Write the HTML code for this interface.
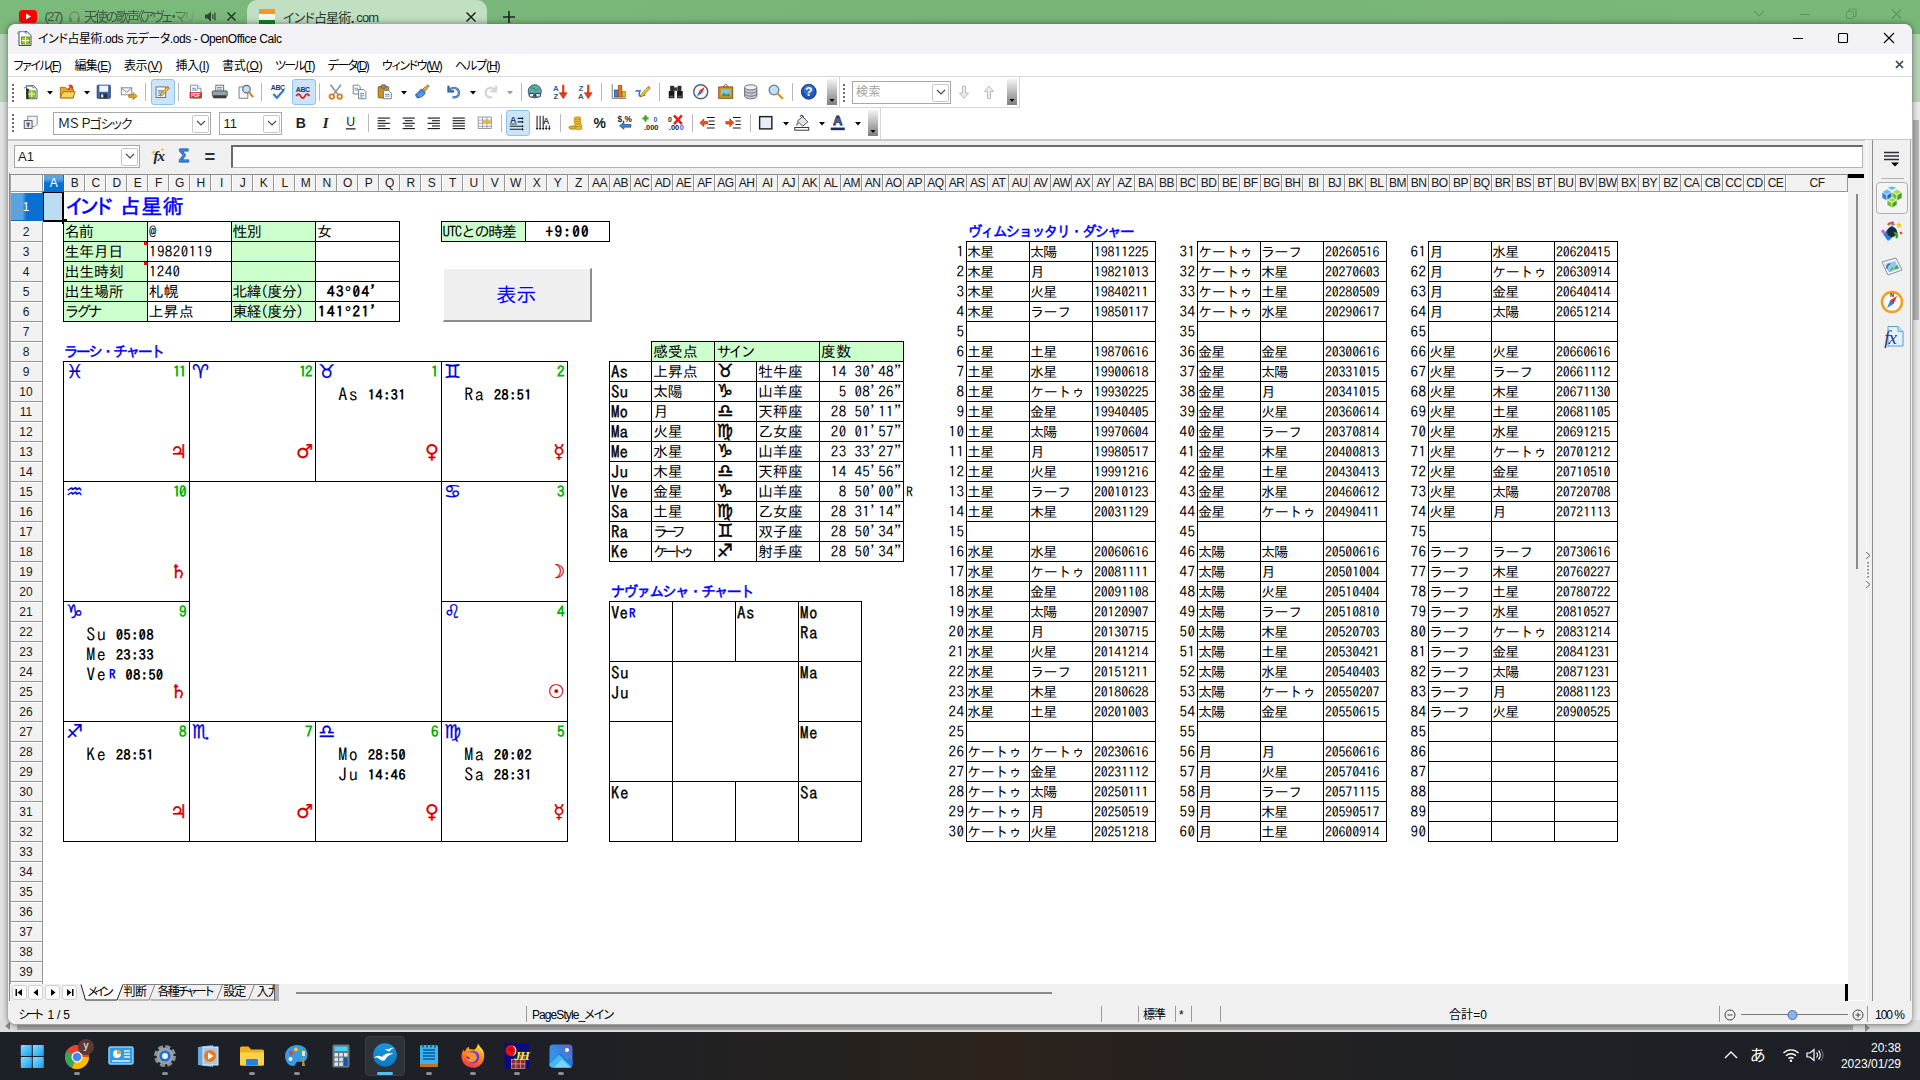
<!DOCTYPE html><html lang="ja"><head><meta charset="utf-8"><title>インド占星術.ods - OpenOffice Calc</title><style>
*{box-sizing:border-box;margin:0;padding:0}
html,body{width:1920px;height:1080px;overflow:hidden;background:#e6e6e6}
body{position:relative;font-family:"Liberation Sans","Noto Sans CJK JP",sans-serif;font-size:12px;color:#000}
.a{position:absolute}
.ui,.menu{font-family:"Liberation Sans","Noto Sans CJK JP",sans-serif;font-feature-settings:"palt"}
.g{font-family:"IPAGothic","Liberation Sans",monospace}
.sym{font-family:"DejaVu Sans","Liberation Sans",sans-serif}
#chrome{left:0;top:0;width:1920px;height:34px;background:linear-gradient(90deg,#7cba7c 0%,#78b478 55%,#7ab87a 100%)}
#chrome2{left:0;top:34px;width:1920px;height:68px;background:#b9d4b9}
#chromepage{left:0;top:102px;width:1920px;height:930px;background:#e4e4e4}
#win{left:8px;top:24px;width:1904px;height:1000px;background:#fff;border-radius:8px 8px 8px 8px;box-shadow:0 0 7px 1px rgba(0,0,0,.28),0 1px 4px rgba(0,0,0,.25);overflow:hidden}
#title{left:0;top:0;width:1904px;height:30px;background:#f2f2f7}
#menubar{left:0;top:30px;width:1904px;height:22px;background:#fff}
#tb{left:0;top:52px;width:1904px;height:64px;background:#fff;border-top:1px solid #d9d9d9}
#fbar{left:0;top:115px;width:1904px;height:35px;background:#f0f0f0;border-top:2px solid #c8c8c8}
#task{left:0;top:1032px;width:1920px;height:48px;background:linear-gradient(90deg,#1c2027 0%,#1e2026 30%,#24211f 42%,#2c231c 52%,#25211f 62%,#1f2125 75%,#1c1f26 100%)}
.menu span{position:absolute;top:4px;font-size:12px;line-height:17px;white-space:nowrap;color:#000}
.menu u{text-decoration:underline;text-underline-offset:1px}
.ch{position:absolute;top:0;height:18px;border-right:1px solid #969696;border-bottom:1px solid #969696;background:#f2f2f2;box-shadow:inset 1px 0 0 #fff;padding-left:1px;text-align:center;font-size:12px;line-height:19px;color:#1a1a1a;letter-spacing:-0.5px;white-space:nowrap;overflow:hidden}
.rh{position:absolute;left:0;width:33px;border-right:1px solid #969696;border-bottom:1px solid #969696;background:#f2f2f2;box-shadow:inset 0 1px 0 #fff;text-align:center;font-size:12px;color:#1a1a1a;white-space:nowrap}
.c{position:absolute;font-size:15px;line-height:19px;white-space:nowrap;overflow:hidden;font-family:"IPAGothic","Liberation Sans",monospace;padding-left:1px}
.b{position:absolute;border:1px solid #000}
.hl{position:absolute;height:1px;background:#000}
.vl{position:absolute;width:1px;background:#000}
.gr{background:#ccffcc}
.bl{color:#0000ff}
</style></head><body>
<div id="chrome" class="a" style=""></div>
<div id="chrome2" class="a" style=""></div>
<div id="chromepage" class="a" style=""></div>
<div class="a" style="left:1905px;top:102px;width:15px;height:930px;background:#ececec"></div>
<div class="a" style="left:1913px;top:120px;width:6px;height:200px;background:#b4b4b4"></div>
<div class="a" style="left:0;top:1020px;width:1920px;height:12px;background:#dedede"></div>
<div class="a" style="left:17px;top:1025px;width:1836px;height:5px;background:#a4a4a4"></div>
<svg class="a" style="left:5px;top:1022px" width="6" height="8" viewBox="0 0 6 8"><path d="M5 0v8L0 4z" fill="#8a8a8a"/></svg>
<svg class="a" style="left:1864px;top:1024px" width="6" height="8" viewBox="0 0 6 8"><path d="M1 0v8l5-4z" fill="#8a8a8a"/></svg>
<div class="a" style="left:247px;top:0;width:240px;height:34px;background:#c1dfc1;border-radius:10px 10px 0 0"></div>
<svg class="a" style="left:19px;top:10px" width="18" height="13" viewBox="0 0 18 13"><rect x="0" y="0" width="18" height="13" rx="3.5" fill="#f00"/><path d="M7 3.5v6l5-3z" fill="#fff"/></svg>
<div class="a ui" style="left:44.4px;top:7px;font-size:13px;line-height:19px;color:#3c5a40;white-space:nowrap;letter-spacing:-1.38px">(27)</div>
<svg class="a" style="left:68px;top:10px" width="13" height="13" viewBox="0 0 13 13"><path d="M2 8.500V6.500a4.500 4.500 0 0 1 9 0v2" fill="none" stroke="#6a8a6c" stroke-width="1.300"/><rect x="1" y="7.500" width="2.800" height="4.500" rx="1" fill="#6a8a6c"/><rect x="9.200" y="7.500" width="2.800" height="4.500" rx="1" fill="#6a8a6c"/></svg>
<div class="a ui" style="left:84px;top:7px;font-size:13px;line-height:19px;color:#3c5a40;white-space:nowrap;letter-spacing:-2.13px;width:113px;overflow:hidden;-webkit-mask-image:linear-gradient(90deg,#000 78%,transparent 100%);mask-image:linear-gradient(90deg,#000 78%,transparent 100%)">天使の歌声《アヴェ・マリア》</div>
<svg class="a" style="left:205px;top:11px" width="12" height="11" viewBox="0 0 12 11"><path d="M0 3.5h2.5L6 .5v10L2.500 7.500H0z" fill="#2d4a30"/><path d="M8 3v5M10 1.500v8" stroke="#2d4a30" stroke-width="1.200" fill="none"/></svg>
<svg class="a" style="left:227px;top:12px" width="9" height="9" viewBox="0 0 9 9"><path d="M.5.500l8 8M8.500.500l-8 8" stroke="#1f3a22" stroke-width="1.500"/></svg>
<div class="a" style="left:259px;top:9px;width:16px;height:5px;background:#f7962c"></div>
<div class="a" style="left:259px;top:14px;width:16px;height:6px;background:#f4f4f0"></div>
<div class="a" style="left:259px;top:20px;width:16px;height:4px;background:#12861f"></div>
<div class="a ui" style="left:283px;top:7px;font-size:13px;color:#2a3b2c;white-space:nowrap;letter-spacing:-0.8px">インド占星術．com</div>
<svg class="a" style="left:466px;top:12px" width="10" height="10" viewBox="0 0 10 10"><path d="M.5.500l9 9M9.500.500l-9 9" stroke="#1c2a1e" stroke-width="1.500"/></svg>
<svg class="a" style="left:503px;top:11px" width="12" height="12" viewBox="0 0 12 12"><path d="M6 0v12M0 6h12" stroke="#1c2a1e" stroke-width="1.600"/></svg>
<svg class="a" style="left:1750px;top:6px" width="160" height="16" viewBox="0 0 160 16"><g stroke="#5a9a5c" stroke-width="1.100" fill="none"><path d="M4 5l5 5 5-5"/><path d="M50 8.500h10"/><rect x="96.500" y="5.500" width="7" height="7" rx="1.500"/><path d="M98.500 5.500v-1.500a1 1 0 0 1 1-1h5.500a1 1 0 0 1 1 1v5.500a1 1 0 0 1-1 1h-1.500"/><path d="M142 3.500l9 9M151 3.500l-9 9"/></g></svg>
<div id="win" class="a" style=""><div id="title" class="a" style=""></div><svg class="a" style="left:9px;top:5px" width="16" height="17" viewBox="0 0 16 17"><path d="M2 2.500h8l4 4v10H2z" fill="#fdfdfd" stroke="#3b4a5c" stroke-width="1"/><path d="M0 4.500c4-3 7-3 10 0" stroke="#8899aa" stroke-width="1.300" fill="none"/><rect x="4.500" y="8" width="8" height="7" fill="#9ccb2a" stroke="#56751a" stroke-width=".8"/><path d="M4.500 11.500h8M8.500 8v7" stroke="#fff" stroke-width=".9"/></svg><div class="a ui" style="left:30px;top:7px;font-size:12px;line-height:17px;letter-spacing:-0.43px;white-space:nowrap;color:#000">インド占星術.ods 元データ.ods - OpenOffice Calc</div><svg class="a" style="left:1780px;top:7px" width="120" height="14" viewBox="0 0 120 14"><g stroke="#000" stroke-width="1.100" fill="none"><path d="M5 7.500h10"/><rect x="50.500" y="2.500" width="9" height="9" rx="1"/><path d="M96 2l10 10M106 2l-10 10"/></g></svg><div id="menubar" class="a menu" style=""></div><div class="a menu" style="left:0;top:30px;width:1904px;height:22px"><span style="left:5.5px;letter-spacing:-1.43px">ファイル(<u>F</u>)</span><span style="left:66.5px;letter-spacing:-0.73px">編集(<u>E</u>)</span><span style="left:116px;letter-spacing:-0.38px">表示(<u>V</u>)</span><span style="left:167.5px;letter-spacing:-0.36px">挿入(<u>I</u>)</span><span style="left:214px;letter-spacing:-0.16px">書式(<u>O</u>)</span><span style="left:267px;letter-spacing:-1.79px">ツール(<u>T</u>)</span><span style="left:319.7px;letter-spacing:-1.64px">データ(<u>D</u>)</span><span style="left:374px;letter-spacing:-1.37px">ウィンドウ(<u>W</u>)</span><span style="left:447px;letter-spacing:-1.12px">ヘルプ(<u>H</u>)</span></div><svg class="a" style="left:1887px;top:36px" width="9" height="9" viewBox="0 0 9 9"><path d="M1 1l7 7M8 1l-7 7" stroke="#3c4654" stroke-width="1.700"/></svg><div id="tb" class="a" style=""></div><div id="fbar" class="a" style=""></div><svg class="a" style="left:4px;top:60px;" width="2" height="24" viewBox="0 0 2 24"><rect x="0" y="0" width="2" height="2" fill="#6a6a6a"/><rect x="0" y="4" width="2" height="2" fill="#6a6a6a"/><rect x="0" y="8" width="2" height="2" fill="#6a6a6a"/><rect x="0" y="12" width="2" height="2" fill="#6a6a6a"/><rect x="0" y="16" width="2" height="2" fill="#6a6a6a"/></svg><svg class="a" style="left:4px;top:90px;" width="2" height="24" viewBox="0 0 2 24"><rect x="0" y="0" width="2" height="2" fill="#6a6a6a"/><rect x="0" y="4" width="2" height="2" fill="#6a6a6a"/><rect x="0" y="8" width="2" height="2" fill="#6a6a6a"/><rect x="0" y="12" width="2" height="2" fill="#6a6a6a"/><rect x="0" y="16" width="2" height="2" fill="#6a6a6a"/></svg><div class="a" style="left:0px;top:83px;width:1012px;height:1px;background:#d6d6d6"></div><div class="a" style="left:831px;top:53px;width:1px;height:30px;background:#d6d6d6"></div><div class="a" style="left:1011px;top:53px;width:1px;height:31px;background:#d6d6d6"></div><div class="a" style="left:872px;top:84px;width:1px;height:31px;background:#d6d6d6"></div><div class="a" style="left:142.5px;top:55.0px;width:24px;height:26px;background:#cce4f7;border:1px solid #8cc4f0;border-radius:3px"></div><div class="a" style="left:283.5px;top:55.0px;width:24px;height:26px;background:#cce4f7;border:1px solid #8cc4f0;border-radius:3px"></div><div class="a" style="left:498.0px;top:86.0px;width:24px;height:26px;background:#cce4f7;border:1px solid #8cc4f0;border-radius:3px"></div><svg class="a" style="left:15.100000000000001px;top:59.2px;" width="17.5" height="17.5" viewBox="0 0 20 20"><path d="M4 3h8l4 4v11H4z" fill="#fdfdfd" stroke="#39485a" stroke-width="1"/><path d="M4 6v12h3V7z" fill="#1a222c"/><path d="M1 6c4-3.500 8-3.500 12 0" stroke="#8a98a8" stroke-width="1.400" fill="none"/><rect x="6" y="9" width="8" height="7.500" fill="#9ccb2a" stroke="#5a7a1a" stroke-width=".8"/><path d="M6 12.700h8M10 9v7.500" stroke="#fff" stroke-width=".9"/></svg><svg class="a" style="left:51.0px;top:59.2px;" width="17.5" height="17.5" viewBox="0 0 20 20"><path d="M1.500 5h6l1.500 2h7.500v10H1.500z" fill="#e8a825" stroke="#9a6a10" stroke-width="1"/><path d="M1.500 17l3-7h14l-2.500 7z" fill="#fbd25a" stroke="#9a6a10" stroke-width="1"/><path d="M10 8l5-5M15 3h-4M15 3v4" stroke="#d8401a" stroke-width="1.800" fill="none"/></svg><svg class="a" style="left:87.0px;top:59.2px;" width="17.5" height="17.5" viewBox="0 0 20 20"><rect x="2.500" y="2.500" width="15" height="15" rx="1" fill="#3f6ca8" stroke="#1f3a66" stroke-width="1"/><rect x="5" y="3" width="10" height="7" fill="#eef3fa"/><rect x="6" y="12" width="8" height="5.500" fill="#2a2f3a"/><rect x="7" y="13" width="2.500" height="3.500" fill="#dfe6f0"/></svg><svg class="a" style="left:112.1px;top:59.2px;" width="17.5" height="17.5" viewBox="0 0 20 20"><rect x="1.500" y="5.500" width="12" height="8" fill="#f4f4f4" stroke="#7a8088" stroke-width="1"/><path d="M1.500 5.500l6 5 6-5" fill="none" stroke="#7a8088" stroke-width="1"/><path d="M10 13.500h5v-2.500l4.500 4-4.500 4v-2.500h-5z" fill="#f0a020" stroke="#a86a08" stroke-width=".8"/></svg><svg class="a" style="left:145.1px;top:59.2px;" width="17.5" height="17.5" viewBox="0 0 20 20"><rect x="3.500" y="4.500" width="11" height="12" fill="#fff" stroke="#5a6674" stroke-width="1"/><path d="M5.500 9h6M5.500 11.500h6M5.500 14h4" stroke="#3b78c4" stroke-width="1.200"/><path d="M9 12l7.500-8 2 2-7.500 8-3 1z" fill="#f2c03a" stroke="#8a6a18" stroke-width=".8"/><path d="M16 4.500l2 2 .8-1.200-1.600-1.600z" fill="#e05a6a"/></svg><svg class="a" style="left:179.1px;top:59.2px;" width="17.5" height="17.5" viewBox="0 0 20 20"><path d="M4 2.500h8l4 4v11H4z" fill="#fff" stroke="#7a8088" stroke-width="1"/><path d="M12 2.500v4h4" fill="#e8ecf2" stroke="#7a8088" stroke-width=".8"/><path d="M6 6h4M6 8h6" stroke="#3b78c4" stroke-width="1"/><rect x="3" y="10.500" width="14" height="6.500" fill="#d81f26"/><text x="10" y="15.800" font-family="Liberation Sans,sans-serif" font-size="5.500" font-weight="bold" fill="#fff" text-anchor="middle">PDF</text></svg><svg class="a" style="left:203.1px;top:59.2px;" width="17.5" height="17.5" viewBox="0 0 20 20"><rect x="5.500" y="2.500" width="9" height="7" fill="#fff" stroke="#5a6068" stroke-width="1"/><path d="M7 5h6M7 7h6" stroke="#3b78c4" stroke-width="1"/><rect x="1.500" y="9" width="17" height="6.500" rx="1.200" fill="#9aa0a8" stroke="#42474e" stroke-width="1"/><rect x="2.500" y="14" width="15" height="3.500" fill="#3a3e44"/><circle cx="15.500" cy="11.500" r="1" fill="#5cd03a"/></svg><svg class="a" style="left:228.1px;top:59.2px;" width="17.5" height="17.5" viewBox="0 0 20 20"><path d="M3.500 4.500h7l3 3v10h-10z" fill="#f6f7f9" stroke="#6a727c" stroke-width="1"/><circle cx="12" cy="7" r="4.300" fill="#bfe0f6" stroke="#5a6672" stroke-width="1.300"/><path d="M15 10.500l4 5" stroke="#c08a28" stroke-width="2.400" stroke-linecap="round"/></svg><svg class="a" style="left:261.1px;top:59.2px;" width="17.5" height="17.5" viewBox="0 0 20 20"><text x="10" y="8.500" font-family="Liberation Sans,sans-serif" font-size="8" font-weight="bold" fill="#1d3a6a" text-anchor="middle" letter-spacing="-.4">ABC</text><path d="M5 12.500l4 4.500 8-9" stroke="#2f7fd6" stroke-width="2.600" fill="none"/></svg><svg class="a" style="left:286.1px;top:59.2px;" width="17.5" height="17.5" viewBox="0 0 20 20"><text x="10" y="10" font-family="Liberation Sans,sans-serif" font-size="8" font-weight="bold" fill="#1d3a6a" text-anchor="middle" letter-spacing="-.4">ABC</text><path d="M2.500 15c2-3 3.500-3 5 0s3.500 3 5 0 3.500-3 5 0" stroke="#e01818" stroke-width="2" fill="none"/></svg><svg class="a" style="left:319.1px;top:59.2px;" width="17.5" height="17.5" viewBox="0 0 20 20"><path d="M4 2l8.500 11M16 2L7.500 13" stroke="#8a9098" stroke-width="1.800"/><circle cx="5.500" cy="15.500" r="2.600" fill="none" stroke="#e07818" stroke-width="2"/><circle cx="14.500" cy="15.500" r="2.600" fill="none" stroke="#e07818" stroke-width="2"/></svg><svg class="a" style="left:343.1px;top:59.2px;" width="17.5" height="17.5" viewBox="0 0 20 20"><path d="M2.500 2.500h6l2 2v8h-8z" fill="#fff" stroke="#6a727c" stroke-width="1"/><path d="M4 6h4M4 8h5" stroke="#3b78c4" stroke-width=".9"/><path d="M8.500 7.500h6l2.500 2.500v8h-8.500z" fill="#fff" stroke="#6a727c" stroke-width="1"/><path d="M10 12h5M10 14h5M10 16h4" stroke="#3b78c4" stroke-width=".9"/></svg><svg class="a" style="left:368.1px;top:59.2px;" width="17.5" height="17.5" viewBox="0 0 20 20"><rect x="2.500" y="4" width="12" height="13" rx="1" fill="#c8932a" stroke="#7a5a14" stroke-width="1"/><rect x="6" y="2" width="5" height="4" rx="1" fill="#8a9098" stroke="#4a5058" stroke-width=".8"/><path d="M8.500 8.500h6l3 3v6.500h-9z" fill="#fff" stroke="#6a727c" stroke-width="1"/><path d="M10 13h5.500M10 15h5.500" stroke="#3b78c4" stroke-width=".9"/></svg><svg class="a" style="left:405.1px;top:59.2px;" width="17.5" height="17.5" viewBox="0 0 20 20"><path d="M11 7l6-5 1.500 1.500-5 6z" fill="#e8b030" stroke="#7a5a14" stroke-width=".8"/><path d="M3 13c2 0 4-5 7-6l4 4c-1 3-5 6-9 6-1-1-2-2-2-4z" fill="#3f86d8" stroke="#1f4a86" stroke-width=".9"/><path d="M6 15l4-4M8 16l4-4" stroke="#9cc6f2" stroke-width=".9"/></svg><svg class="a" style="left:437.1px;top:59.2px;" width="17.5" height="17.5" viewBox="0 0 20 20"><path d="M4 3v6.500h6.500" fill="none" stroke="#2f5f9e" stroke-width="2.600"/><path d="M4.500 9c2.500-4 8-4.500 10.500-1s.5 8-4.500 8.500h-2" fill="none" stroke="#2f5f9e" stroke-width="2.600"/><path d="M4.500 9c2.500-4 8-4.500 10.500-1s.5 8-4.500 8.500h-2" fill="none" stroke="#8ab4e6" stroke-width="1"/></svg><svg class="a" style="left:474.1px;top:59.2px;" width="17.5" height="17.5" viewBox="0 0 20 20"><g opacity=".55"><path d="M16 3v6.500H9.500" fill="none" stroke="#b0b4ba" stroke-width="2.600"/><path d="M15.500 9c-2.500-4-8-4.500-10.500-1s-.5 8 4.500 8.500h2" fill="none" stroke="#b0b4ba" stroke-width="2.600"/></g></svg><svg class="a" style="left:518.0px;top:59.2px;" width="17.5" height="17.5" viewBox="0 0 20 20"><circle cx="10" cy="9.500" r="7.500" fill="#58a6d8" stroke="#3a4a5a" stroke-width="1"/><path d="M5 5c2 2 4 0 5 2s3 1 4-1M4 12c2-1 3 1 5 0s4 1 6 0" fill="#6cc04a" stroke="#4a9a30" stroke-width="1.500"/><rect x="3.500" y="12" width="6" height="4" rx="2" fill="#e8eaee" stroke="#3a3f46" stroke-width="1.200"/><rect x="10.500" y="12" width="6" height="4" rx="2" fill="#e8eaee" stroke="#3a3f46" stroke-width="1.200"/><path d="M8 14h4" stroke="#3a3f46" stroke-width="1.300"/></svg><svg class="a" style="left:543.0px;top:59.2px;" width="17.5" height="17.5" viewBox="0 0 20 20"><text x="5.500" y="9" font-family="Liberation Sans,sans-serif" font-size="9" font-weight="bold" fill="#1d63c4" text-anchor="middle">A</text><text x="5.500" y="18" font-family="Liberation Sans,sans-serif" font-size="9" font-weight="bold" fill="#4a5058" text-anchor="middle">Z</text><path d="M14 2v11" stroke="#e0401a" stroke-width="2.600"/><path d="M9.500 11h9l-4.500 7z" fill="#e0401a" stroke="#a82808" stroke-width=".6"/></svg><svg class="a" style="left:568.0px;top:59.2px;" width="17.5" height="17.5" viewBox="0 0 20 20"><text x="5.500" y="9" font-family="Liberation Sans,sans-serif" font-size="9" font-weight="bold" fill="#1d63c4" text-anchor="middle">Z</text><text x="5.500" y="18" font-family="Liberation Sans,sans-serif" font-size="9" font-weight="bold" fill="#4a5058" text-anchor="middle">A</text><path d="M14 2v11" stroke="#e0401a" stroke-width="2.600"/><path d="M9.500 11h9l-4.500 7z" fill="#e0401a" stroke="#a82808" stroke-width=".6"/></svg><svg class="a" style="left:602.0px;top:59.2px;" width="17.5" height="17.5" viewBox="0 0 20 20"><path d="M2.500 1.500v16h16" fill="none" stroke="#5a6068" stroke-width="1"/><rect x="5" y="8" width="4" height="8" fill="#3f86d8" stroke="#1f4a86" stroke-width=".8"/><rect x="9.500" y="3" width="4" height="13" fill="#e8701a" stroke="#9a4208" stroke-width=".8"/><rect x="14" y="9.500" width="3.500" height="6.500" fill="#f2b81a" stroke="#9a7208" stroke-width=".8"/></svg><svg class="a" style="left:626.0px;top:59.2px;" width="17.5" height="17.5" viewBox="0 0 20 20"><path d="M2 10c2-4 4 2 5-1s-3 6 0 6 4-2 6-1" fill="none" stroke="#2f6fd0" stroke-width="1.600"/><path d="M8 13l8.500-9 2 2-8.500 9-3 1z" fill="#f2c03a" stroke="#8a6a18" stroke-width=".8"/><path d="M16 4.500l2 2 .8-1.200-1.600-1.600z" fill="#e05a6a"/></svg><svg class="a" style="left:659.0px;top:59.2px;" width="17.5" height="17.5" viewBox="0 0 20 20"><rect x="3.500" y="3" width="4.500" height="6" rx="1" fill="#2a2d32"/><rect x="12" y="3" width="4.500" height="6" rx="1" fill="#2a2d32"/><rect x="8" y="5" width="4" height="4" fill="#3a3e44"/><path d="M2 9h6.500v8.500H2zM11.500 9H18v8.500h-6.500z" fill="#16181c"/><rect x="3" y="14.500" width="4.500" height="2" fill="#5a6068"/><rect x="12.500" y="14.500" width="4.500" height="2" fill="#5a6068"/></svg><svg class="a" style="left:684.0px;top:59.2px;" width="17.5" height="17.5" viewBox="0 0 20 20"><circle cx="10" cy="10" r="8" fill="#f4f6f8" stroke="#5a6068" stroke-width="1.600"/><path d="M14.500 4.500l-3 7-3-3z" fill="#e0301a"/><path d="M5.500 15.500l3-7 3 3z" fill="#2f6fd0"/></svg><svg class="a" style="left:709.0px;top:59.2px;" width="17.5" height="17.5" viewBox="0 0 20 20"><path d="M10 1l-3 3.500h6z" fill="none" stroke="#6a5a2a" stroke-width="1"/><rect x="2" y="4.500" width="16" height="13" fill="#d8901a" stroke="#7a4a08" stroke-width="1"/><rect x="4.500" y="7" width="11" height="8" fill="#7cc4f0"/><path d="M4.500 15l3.500-4 3 2.500 2-2 2.500 3.500z" fill="#4a9a2a"/></svg><svg class="a" style="left:734.0px;top:59.2px;" width="17.5" height="17.5" viewBox="0 0 20 20"><path d="M3 5v10c0 1.700 3 3 7 3s7-1.300 7-3V5" fill="#c8ccd2" stroke="#5a6068" stroke-width="1"/><ellipse cx="10" cy="5" rx="7" ry="3" fill="#eceef2" stroke="#5a6068" stroke-width="1"/><path d="M3 8.500c0 1.700 3 3 7 3s7-1.300 7-3M3 12c0 1.700 3 3 7 3s7-1.300 7-3" fill="none" stroke="#5a6068" stroke-width="1"/></svg><svg class="a" style="left:759.0px;top:59.2px;" width="17.5" height="17.5" viewBox="0 0 20 20"><circle cx="8" cy="8" r="5.500" fill="#bfe0f6" stroke="#6a7a8a" stroke-width="1.500"/><path d="M12 12l5.500 5.500" stroke="#d8981a" stroke-width="2.600" stroke-linecap="round"/></svg><svg class="a" style="left:792.0px;top:59.2px;" width="17.5" height="17.5" viewBox="0 0 20 20"><circle cx="10" cy="10" r="8.500" fill="#1d55b4" stroke="#0f3478" stroke-width="1"/><circle cx="10" cy="8" r="6" fill="#3f7fe0" opacity=".6"/><text x="10" y="15" font-family="Liberation Sans,sans-serif" font-size="14" font-weight="bold" fill="#fff" text-anchor="middle">?</text></svg><svg class="a" style="left:38.5px;top:66.5px;" width="6" height="4" viewBox="0 0 6 4"><path d="M0 0h6l-3 3.500z" fill="#000"/></svg><svg class="a" style="left:75.5px;top:66.5px;" width="6" height="4" viewBox="0 0 6 4"><path d="M0 0h6l-3 3.500z" fill="#000"/></svg><svg class="a" style="left:392.5px;top:66.5px;" width="6" height="4" viewBox="0 0 6 4"><path d="M0 0h6l-3 3.500z" fill="#000"/></svg><svg class="a" style="left:461.5px;top:66.5px;" width="6" height="4" viewBox="0 0 6 4"><path d="M0 0h6l-3 3.500z" fill="#000"/></svg><svg class="a" style="left:498.5px;top:66.5px;" width="6" height="4" viewBox="0 0 6 4"><path d="M0 0h6l-3 3.500z" fill="#9a9a9a"/></svg><div class="a" style="left:137px;top:59px;width:1px;height:18px;background:#b8b8b8"></div><div class="a" style="left:170px;top:59px;width:1px;height:18px;background:#b8b8b8"></div><div class="a" style="left:253px;top:59px;width:1px;height:18px;background:#b8b8b8"></div><div class="a" style="left:311px;top:59px;width:1px;height:18px;background:#b8b8b8"></div><div class="a" style="left:513px;top:59px;width:1px;height:18px;background:#b8b8b8"></div><div class="a" style="left:593px;top:59px;width:1px;height:18px;background:#b8b8b8"></div><div class="a" style="left:651px;top:59px;width:1px;height:18px;background:#b8b8b8"></div><div class="a" style="left:784px;top:59px;width:1px;height:18px;background:#b8b8b8"></div><svg class="a" style="left:819px;top:55px;" width="10" height="26" viewBox="0 0 10 26"><defs><linearGradient id="eg827" x1="0" y1="0" x2="0" y2="1"><stop offset="0" stop-color="#f4f4f4"/><stop offset="1" stop-color="#7e7e7e"/></linearGradient></defs><rect width="10" height="26" fill="url(#eg827)"/><path d="M2.500 20h5l-2.500 3z" fill="#000"/></svg><svg class="a" style="left:835px;top:60px;" width="2" height="24" viewBox="0 0 2 24"><rect x="0" y="0" width="2" height="2" fill="#6a6a6a"/><rect x="0" y="4" width="2" height="2" fill="#6a6a6a"/><rect x="0" y="8" width="2" height="2" fill="#6a6a6a"/><rect x="0" y="12" width="2" height="2" fill="#6a6a6a"/><rect x="0" y="16" width="2" height="2" fill="#6a6a6a"/></svg><div class="a" style="left:844px;top:57px;width:99px;height:23px;background:#fff;border:1px solid #a8a8a8"></div><div class="a" style="left:924px;top:60px;width:17px;height:18px;background:#fff;border:1px solid #c8c8c8;border-radius:2px"></div><svg class="a" style="left:927.5px;top:65px;" width="10" height="6" viewBox="0 0 10 6"><path d="M1 1l4 4 4-4" fill="none" stroke="#4a4a4a" stroke-width="1.100"/></svg><div class="a ui" style="left:848px;top:60px;font-size:12px;line-height:17px;color:#a4a4a4;white-space:nowrap;letter-spacing:0.5px">検索</div><svg class="a" style="left:949px;top:61px;" width="40" height="15" viewBox="0 0 40 15"><g fill="#ececec" stroke="#bcbcbc" stroke-width="1"><path d="M5.500 1v7h-3l4.500 5.500L11.500 8h-3V1z"/><path d="M30.500 13.500v-7h-3l4.500-5.500 4.500 5.500h-3v7z"/></g></svg><svg class="a" style="left:999px;top:55px;" width="10" height="26" viewBox="0 0 10 26"><defs><linearGradient id="eg1007" x1="0" y1="0" x2="0" y2="1"><stop offset="0" stop-color="#f4f4f4"/><stop offset="1" stop-color="#7e7e7e"/></linearGradient></defs><rect width="10" height="26" fill="url(#eg1007)"/><path d="M2.500 20h5l-2.500 3z" fill="#000"/></svg><svg class="a" style="left:14.2px;top:90.2px;" width="17.5" height="17.5" viewBox="0 0 20 20"><path d="M6.500 2.500h11v9l-3 3h-8z" fill="#f0f2f6" stroke="#7a828c" stroke-width="1"/><rect x="2.500" y="7.500" width="9" height="9" fill="#dfe3ea" stroke="#4a5058" stroke-width="1"/><path d="M5 10.500h4M7 10.500v4.500M5.500 12.500h3" stroke="#2a2d32" stroke-width="1"/></svg><div class="a" style="left:45px;top:88px;width:158px;height:23px;background:#fff;border:1px solid #a8a8a8"></div><div class="a" style="left:184px;top:91px;width:17px;height:18px;background:#fff;border:1px solid #c8c8c8;border-radius:2px"></div><svg class="a" style="left:187.5px;top:96px;" width="10" height="6" viewBox="0 0 10 6"><path d="M1 1l4 4 4-4" fill="none" stroke="#4a4a4a" stroke-width="1.100"/></svg><div class="a ui" style="left:49.5px;top:91px;font-size:13px;line-height:17px;color:#1a1a1a;white-space:nowrap;letter-spacing:-1.03px">ＭＳ Ｐゴシック</div><div class="a" style="left:211px;top:88px;width:63px;height:23px;background:#fff;border:1px solid #a8a8a8"></div><div class="a" style="left:255px;top:91px;width:17px;height:18px;background:#fff;border:1px solid #c8c8c8;border-radius:2px"></div><svg class="a" style="left:258.5px;top:96px;" width="10" height="6" viewBox="0 0 10 6"><path d="M1 1l4 4 4-4" fill="none" stroke="#4a4a4a" stroke-width="1.100"/></svg><div class="a ui" style="left:215.5px;top:91px;font-size:13px;line-height:17px;color:#1a1a1a;white-space:nowrap;letter-spacing:0">11</div><svg class="a" style="left:284.2px;top:90.2px;" width="17.5" height="17.5" viewBox="0 0 20 20"><text x="10" y="16" font-family="Liberation Sans,sans-serif" font-size="16" font-weight="bold" fill="#1a1d2a" text-anchor="middle">B</text></svg><svg class="a" style="left:309.2px;top:90.2px;" width="17.5" height="17.5" viewBox="0 0 20 20"><text x="10" y="16" font-family="Liberation Serif,serif" font-size="17" font-style="italic" font-weight="bold" fill="#1a1d2a" text-anchor="middle">I</text></svg><svg class="a" style="left:334.2px;top:90.2px;" width="17.5" height="17.5" viewBox="0 0 20 20"><text x="10" y="14" font-family="Liberation Sans,sans-serif" font-size="14" fill="#1a1d2a" text-anchor="middle">U</text><path d="M4.500 17h11" stroke="#1a1d2a" stroke-width="1.200"/></svg><svg class="a" style="left:367.2px;top:90.2px;" width="17.5" height="17.5" viewBox="0 0 20 20"><rect x="3" y="4" width="14" height="1.300" fill="#1a1d22"/><rect x="3" y="7" width="9" height="1.300" fill="#1a1d22"/><rect x="3" y="10" width="14" height="1.300" fill="#1a1d22"/><rect x="3" y="13" width="9" height="1.300" fill="#1a1d22"/><rect x="3" y="16" width="14" height="1.300" fill="#1a1d22"/></svg><svg class="a" style="left:392.2px;top:90.2px;" width="17.5" height="17.5" viewBox="0 0 20 20"><rect x="3" y="4" width="14" height="1.300" fill="#1a1d22"/><rect x="5.5" y="7" width="9" height="1.300" fill="#1a1d22"/><rect x="3" y="10" width="14" height="1.300" fill="#1a1d22"/><rect x="5.5" y="13" width="9" height="1.300" fill="#1a1d22"/><rect x="3" y="16" width="14" height="1.300" fill="#1a1d22"/></svg><svg class="a" style="left:417.2px;top:90.2px;" width="17.5" height="17.5" viewBox="0 0 20 20"><rect x="3" y="4" width="14" height="1.300" fill="#1a1d22"/><rect x="8" y="7" width="9" height="1.300" fill="#1a1d22"/><rect x="3" y="10" width="14" height="1.300" fill="#1a1d22"/><rect x="8" y="13" width="9" height="1.300" fill="#1a1d22"/><rect x="3" y="16" width="14" height="1.300" fill="#1a1d22"/></svg><svg class="a" style="left:442.2px;top:90.2px;" width="17.5" height="17.5" viewBox="0 0 20 20"><rect x="3" y="4" width="14" height="1.300" fill="#1a1d22"/><rect x="3" y="7" width="14" height="1.300" fill="#1a1d22"/><rect x="3" y="10" width="14" height="1.300" fill="#1a1d22"/><rect x="3" y="13" width="14" height="1.300" fill="#1a1d22"/><rect x="3" y="16" width="14" height="1.300" fill="#1a1d22"/></svg><svg class="a" style="left:468.2px;top:90.2px;" width="17.5" height="17.5" viewBox="0 0 20 20"><rect x="2.500" y="3.500" width="15" height="13" fill="#fff" stroke="#8a9098" stroke-width="1"/><path d="M2.500 7h15M2.500 10.500h15M2.500 14h15M7.500 3.500v13M12.500 3.500v13" stroke="#8a9098" stroke-width=".9"/><rect x="8" y="7.500" width="9" height="3" fill="#f2b81a"/></svg><svg class="a" style="left:500.2px;top:90.2px;" width="17.5" height="17.5" viewBox="0 0 20 20"><text x="6" y="10" font-family="Liberation Sans,sans-serif" font-size="10" font-weight="bold" fill="#1d3a6a" text-anchor="middle">A</text><path d="M2 11.500h8" stroke="#1d3a6a" stroke-width="1"/><path d="M11 5h6M11 9h6M2 14h15M2 17.500h15" stroke="#1a1d22" stroke-width="1.200"/><path d="M16 3.500l2 1.500-2 1.500zM16 7.500l2 1.500-2 1.500zM16 12.500l2 1.500-2 1.500zM16 16l2 1.500-2 1.500z" fill="#1a1d22"/></svg><svg class="a" style="left:526.2px;top:90.2px;" width="17.5" height="17.5" viewBox="0 0 20 20"><text x="14" y="11" font-family="Liberation Sans,sans-serif" font-size="10" font-weight="bold" fill="#1d3a6a" text-anchor="middle">A</text><path d="M3.500 2v15M7 2v15M10.500 2v15M14 13v4M17.500 13v4" stroke="#1a1d22" stroke-width="1.200"/><path d="M2 16h3l-1.500 2.500zM5.500 16h3L7 18.500zM9 16h3l-1.500 2.500zM12.500 16h3L14 18.500zM16 16h3l-1.500 2.500z" fill="#1a1d22"/></svg><svg class="a" style="left:559.2px;top:90.2px;" width="17.5" height="17.5" viewBox="0 0 20 20"><ellipse cx="12" cy="5" rx="4" ry="1.800" fill="#f2c03a" stroke="#a87a10" stroke-width=".8"/><ellipse cx="12" cy="7.500" rx="4" ry="1.800" fill="#f2c03a" stroke="#a87a10" stroke-width=".8"/><ellipse cx="12" cy="10" rx="4" ry="1.800" fill="#f2c03a" stroke="#a87a10" stroke-width=".8"/><ellipse cx="13" cy="13" rx="4" ry="1.800" fill="#f2c03a" stroke="#a87a10" stroke-width=".8"/><ellipse cx="7" cy="15.500" rx="5" ry="2" fill="#e8a820" stroke="#a87a10" stroke-width=".8"/><ellipse cx="13.500" cy="16" rx="4" ry="1.800" fill="#f2c03a" stroke="#a87a10" stroke-width=".8"/></svg><svg class="a" style="left:583.2px;top:90.2px;" width="17.5" height="17.5" viewBox="0 0 20 20"><text x="10" y="16" font-family="Liberation Sans,sans-serif" font-size="16" font-weight="bold" fill="#1a1d22" text-anchor="middle">%</text></svg><svg class="a" style="left:608.2px;top:90.2px;" width="17.5" height="17.5" viewBox="0 0 20 20"><text x="10" y="9" font-family="Liberation Sans,sans-serif" font-size="9.500" font-weight="bold" fill="#1a1d22" text-anchor="middle">$,%</text><path d="M17 14.500h-8v-2.500l-5 4 5 4v-2.500h8z" fill="#3f86d8" stroke="#1f4a86" stroke-width=".8" transform="translate(0,-2.500)"/></svg><svg class="a" style="left:634.2px;top:90.2px;" width="17.5" height="17.5" viewBox="0 0 20 20"><path d="M4 1.500v7M.5 5h7" stroke="#3aa81a" stroke-width="2.600"/><text x="13" y="9" font-family="Liberation Sans,sans-serif" font-size="8" font-weight="bold" fill="#2f5fd0">0</text><text x="10.500" y="18.500" font-family="Liberation Sans,sans-serif" font-size="8.500" font-weight="bold" fill="#1a1d22" text-anchor="middle">.000</text></svg><svg class="a" style="left:659.2px;top:90.2px;" width="17.5" height="17.5" viewBox="0 0 20 20"><text x="1" y="9" font-family="Liberation Sans,sans-serif" font-size="8" font-weight="bold" fill="#1a1d22">0</text><text x="8" y="18.500" font-family="Liberation Sans,sans-serif" font-size="8.500" font-weight="bold" fill="#1a1d22" text-anchor="middle">.00</text><text x="17" y="18.500" font-family="Liberation Sans,sans-serif" font-size="8.500" font-weight="bold" fill="#2f5fd0" text-anchor="middle">0</text><path d="M8 1.500l9 10M17 1.500l-9 10" stroke="#e02020" stroke-width="2.800"/></svg><svg class="a" style="left:691.2px;top:90.2px;" width="17.5" height="17.5" viewBox="0 0 20 20"><path d="M9 4h9M11 8h7M11 12h7M9 16h9" stroke="#1a1d22" stroke-width="1.300"/><path d="M10 8.500H5.500v-3L1 10l4.500 4.500v-3H10z" fill="#f0501a" stroke="#a83008" stroke-width=".7"/></svg><svg class="a" style="left:717.2px;top:90.2px;" width="17.5" height="17.5" viewBox="0 0 20 20"><path d="M9 4h9M12 8h6M12 12h6M9 16h9" stroke="#1a1d22" stroke-width="1.300"/><path d="M1 8.500h4.500v-3L10 10l-4.500 4.500v-3H1z" fill="#f0501a" stroke="#a83008" stroke-width=".7"/></svg><svg class="a" style="left:749.2px;top:90.2px;" width="17.5" height="17.5" viewBox="0 0 20 20"><rect x="3" y="3" width="14" height="14" fill="#e8ecf4" stroke="#1a1d22" stroke-width="1.600"/></svg><svg class="a" style="left:785.2px;top:90.2px;" width="17.5" height="17.5" viewBox="0 0 20 20"><path d="M5 8l6-5 6 6-6 5z" fill="#dfe3ea" stroke="#3a3f46" stroke-width="1"/><path d="M8 3c1-2 4-2 4 1" fill="none" stroke="#3a3f46" stroke-width="1.200"/><path d="M5 9c-1 1-2 3-1 5 1-1 2-2 3-3z" fill="#8a9098"/><rect x="2" y="15.500" width="16" height="3" fill="#fff" stroke="#1a1d22" stroke-width="1"/></svg><svg class="a" style="left:821.2px;top:90.2px;" width="17.5" height="17.5" viewBox="0 0 20 20"><text x="10" y="13" font-family="Liberation Sans,sans-serif" font-size="15" font-weight="bold" fill="#5a7ab0" stroke="#1d2f55" stroke-width=".9" text-anchor="middle">A</text><rect x="2" y="15.500" width="16" height="3" fill="#1d2f55"/></svg><svg class="a" style="left:774.5px;top:97.5px;" width="6" height="4" viewBox="0 0 6 4"><path d="M0 0h6l-3 3.500z" fill="#000"/></svg><svg class="a" style="left:810.5px;top:97.5px;" width="6" height="4" viewBox="0 0 6 4"><path d="M0 0h6l-3 3.500z" fill="#000"/></svg><svg class="a" style="left:846.5px;top:97.5px;" width="6" height="4" viewBox="0 0 6 4"><path d="M0 0h6l-3 3.500z" fill="#000"/></svg><div class="a" style="left:360px;top:90px;width:1px;height:18px;background:#b8b8b8"></div><div class="a" style="left:493px;top:90px;width:1px;height:18px;background:#b8b8b8"></div><div class="a" style="left:552px;top:90px;width:1px;height:18px;background:#b8b8b8"></div><div class="a" style="left:684px;top:90px;width:1px;height:18px;background:#b8b8b8"></div><div class="a" style="left:742px;top:90px;width:1px;height:18px;background:#b8b8b8"></div><svg class="a" style="left:860px;top:86px;" width="10" height="26" viewBox="0 0 10 26"><defs><linearGradient id="eg868" x1="0" y1="0" x2="0" y2="1"><stop offset="0" stop-color="#f4f4f4"/><stop offset="1" stop-color="#7e7e7e"/></linearGradient></defs><rect width="10" height="26" fill="url(#eg868)"/><path d="M2.500 20h5l-2.500 3z" fill="#000"/></svg><div class="a" style="left:6px;top:121px;width:126px;height:23px;background:#fff;border:1px solid #a8a8a8"></div><div class="a" style="left:113px;top:124px;width:17px;height:18px;background:#fff;border:1px solid #c8c8c8;border-radius:2px"></div><svg class="a" style="left:116.5px;top:129px;" width="10" height="6" viewBox="0 0 10 6"><path d="M1 1l4 4 4-4" fill="none" stroke="#4a4a4a" stroke-width="1.100"/></svg><div class="a ui" style="left:10px;top:124px;font-size:13px;line-height:17px;color:#1a1a1a;white-space:nowrap;letter-spacing:0">A1</div><svg class="a" style="left:142.2px;top:123.19999999999999px;" width="17.5" height="17.5" viewBox="0 0 20 20"><text x="10" y="16" font-family="Liberation Serif,serif" font-size="17" font-style="italic" font-weight="bold" fill="#1a2436" text-anchor="middle" letter-spacing="-1">fx</text><path d="M4 3l.8 1.800 1.800.8-1.800.8L4 9l-.8-1.800L1.400 6.400l1.800-.8zM14 1l.6 1.400 1.400.6-1.400.6L14 5l-.6-1.400L12 3l1.400-.6z" fill="#f2b81a"/></svg><svg class="a" style="left:167.2px;top:123.19999999999999px;" width="17.5" height="17.5" viewBox="0 0 20 20"><text x="10" y="17" font-family="Liberation Sans,sans-serif" font-size="20" font-weight="bold" fill="#3f9ae6" stroke="#1d55b4" stroke-width=".9" text-anchor="middle">Σ</text></svg><svg class="a" style="left:193.2px;top:123.19999999999999px;" width="17.5" height="17.5" viewBox="0 0 20 20"><text x="10" y="18" font-family="Liberation Sans,sans-serif" font-size="21" font-weight="bold" fill="#2a3442" text-anchor="middle">=</text></svg><div class="a" style="left:223px;top:121px;width:1632px;height:23px;background:#fff;border:1px solid #b4b4b4;border-top:2px solid #6a6a6a;border-left:2px solid #6a6a6a"></div><div class="a" style="left:2px;top:150px;width:1838px;height:811px;overflow:hidden;background:#fff"><div class="ch" style="left:0;width:33px"></div><div class="ch" style="left:33px;width:21px;background:linear-gradient(180deg,#58a4e2 0%,#58a4e2 30%,#0a6fd0 55%);color:#fff;border-right-color:#0a6fd0;border-bottom-color:#0a6fd0;">A</div><div class="ch" style="left:54px;width:21px;">B</div><div class="ch" style="left:75px;width:21px;">C</div><div class="ch" style="left:96px;width:21px;">D</div><div class="ch" style="left:117px;width:21px;">E</div><div class="ch" style="left:138px;width:21px;">F</div><div class="ch" style="left:159px;width:21px;">G</div><div class="ch" style="left:180px;width:21px;">H</div><div class="ch" style="left:201px;width:21px;">I</div><div class="ch" style="left:222px;width:21px;">J</div><div class="ch" style="left:243px;width:21px;">K</div><div class="ch" style="left:264px;width:21px;">L</div><div class="ch" style="left:285px;width:21px;">M</div><div class="ch" style="left:306px;width:21px;">N</div><div class="ch" style="left:327px;width:21px;">O</div><div class="ch" style="left:348px;width:21px;">P</div><div class="ch" style="left:369px;width:21px;">Q</div><div class="ch" style="left:390px;width:21px;">R</div><div class="ch" style="left:411px;width:21px;">S</div><div class="ch" style="left:432px;width:21px;">T</div><div class="ch" style="left:453px;width:21px;">U</div><div class="ch" style="left:474px;width:21px;">V</div><div class="ch" style="left:495px;width:21px;">W</div><div class="ch" style="left:516px;width:21px;">X</div><div class="ch" style="left:537px;width:21px;">Y</div><div class="ch" style="left:558px;width:21px;">Z</div><div class="ch" style="left:579px;width:21px;">AA</div><div class="ch" style="left:600px;width:21px;">AB</div><div class="ch" style="left:621px;width:21px;">AC</div><div class="ch" style="left:642px;width:21px;">AD</div><div class="ch" style="left:663px;width:21px;">AE</div><div class="ch" style="left:684px;width:21px;">AF</div><div class="ch" style="left:705px;width:21px;">AG</div><div class="ch" style="left:726px;width:21px;">AH</div><div class="ch" style="left:747px;width:21px;">AI</div><div class="ch" style="left:768px;width:21px;">AJ</div><div class="ch" style="left:789px;width:21px;">AK</div><div class="ch" style="left:810px;width:21px;">AL</div><div class="ch" style="left:831px;width:21px;">AM</div><div class="ch" style="left:852px;width:21px;">AN</div><div class="ch" style="left:873px;width:21px;">AO</div><div class="ch" style="left:894px;width:21px;">AP</div><div class="ch" style="left:915px;width:21px;">AQ</div><div class="ch" style="left:936px;width:21px;">AR</div><div class="ch" style="left:957px;width:21px;">AS</div><div class="ch" style="left:978px;width:21px;">AT</div><div class="ch" style="left:999px;width:21px;">AU</div><div class="ch" style="left:1020px;width:21px;">AV</div><div class="ch" style="left:1041px;width:21px;">AW</div><div class="ch" style="left:1062px;width:21px;">AX</div><div class="ch" style="left:1083px;width:21px;">AY</div><div class="ch" style="left:1104px;width:21px;">AZ</div><div class="ch" style="left:1125px;width:21px;">BA</div><div class="ch" style="left:1146px;width:21px;">BB</div><div class="ch" style="left:1167px;width:21px;">BC</div><div class="ch" style="left:1188px;width:21px;">BD</div><div class="ch" style="left:1209px;width:21px;">BE</div><div class="ch" style="left:1230px;width:21px;">BF</div><div class="ch" style="left:1251px;width:21px;">BG</div><div class="ch" style="left:1272px;width:21px;">BH</div><div class="ch" style="left:1293px;width:21px;">BI</div><div class="ch" style="left:1314px;width:21px;">BJ</div><div class="ch" style="left:1335px;width:21px;">BK</div><div class="ch" style="left:1356px;width:21px;">BL</div><div class="ch" style="left:1377px;width:21px;">BM</div><div class="ch" style="left:1398px;width:21px;">BN</div><div class="ch" style="left:1419px;width:21px;">BO</div><div class="ch" style="left:1440px;width:21px;">BP</div><div class="ch" style="left:1461px;width:21px;">BQ</div><div class="ch" style="left:1482px;width:21px;">BR</div><div class="ch" style="left:1503px;width:21px;">BS</div><div class="ch" style="left:1524px;width:21px;">BT</div><div class="ch" style="left:1545px;width:21px;">BU</div><div class="ch" style="left:1566px;width:21px;">BV</div><div class="ch" style="left:1587px;width:21px;">BW</div><div class="ch" style="left:1608px;width:21px;">BX</div><div class="ch" style="left:1629px;width:21px;">BY</div><div class="ch" style="left:1650px;width:21px;">BZ</div><div class="ch" style="left:1671px;width:21px;">CA</div><div class="ch" style="left:1692px;width:21px;">CB</div><div class="ch" style="left:1713px;width:21px;">CC</div><div class="ch" style="left:1734px;width:21px;">CD</div><div class="ch" style="left:1755px;width:21px;">CE</div><div class="ch" style="left:1776px;width:62px">CF</div><div class="rh" style="top:18px;height:29px;line-height:30px;background:linear-gradient(90deg,#58a4e2 0%,#58a4e2 38%,#0a6fd0 52%);color:#fff;border-right-color:#0a6fd0;border-bottom-color:#0a6fd0;">1</div><div class="rh" style="top:48px;height:20px;line-height:21px;">2</div><div class="rh" style="top:68px;height:20px;line-height:21px;">3</div><div class="rh" style="top:88px;height:20px;line-height:21px;">4</div><div class="rh" style="top:108px;height:20px;line-height:21px;">5</div><div class="rh" style="top:128px;height:20px;line-height:21px;">6</div><div class="rh" style="top:148px;height:20px;line-height:21px;">7</div><div class="rh" style="top:168px;height:20px;line-height:21px;">8</div><div class="rh" style="top:188px;height:20px;line-height:21px;">9</div><div class="rh" style="top:208px;height:20px;line-height:21px;">10</div><div class="rh" style="top:228px;height:20px;line-height:21px;">11</div><div class="rh" style="top:248px;height:20px;line-height:21px;">12</div><div class="rh" style="top:268px;height:20px;line-height:21px;">13</div><div class="rh" style="top:288px;height:20px;line-height:21px;">14</div><div class="rh" style="top:308px;height:20px;line-height:21px;">15</div><div class="rh" style="top:328px;height:20px;line-height:21px;">16</div><div class="rh" style="top:348px;height:20px;line-height:21px;">17</div><div class="rh" style="top:368px;height:20px;line-height:21px;">18</div><div class="rh" style="top:388px;height:20px;line-height:21px;">19</div><div class="rh" style="top:408px;height:20px;line-height:21px;">20</div><div class="rh" style="top:428px;height:20px;line-height:21px;">21</div><div class="rh" style="top:448px;height:20px;line-height:21px;">22</div><div class="rh" style="top:468px;height:20px;line-height:21px;">23</div><div class="rh" style="top:488px;height:20px;line-height:21px;">24</div><div class="rh" style="top:508px;height:20px;line-height:21px;">25</div><div class="rh" style="top:528px;height:20px;line-height:21px;">26</div><div class="rh" style="top:548px;height:20px;line-height:21px;">27</div><div class="rh" style="top:568px;height:20px;line-height:21px;">28</div><div class="rh" style="top:588px;height:20px;line-height:21px;">29</div><div class="rh" style="top:608px;height:20px;line-height:21px;">30</div><div class="rh" style="top:628px;height:20px;line-height:21px;">31</div><div class="rh" style="top:648px;height:20px;line-height:21px;">32</div><div class="rh" style="top:668px;height:20px;line-height:21px;">33</div><div class="rh" style="top:688px;height:20px;line-height:21px;">34</div><div class="rh" style="top:708px;height:20px;line-height:21px;">35</div><div class="rh" style="top:728px;height:20px;line-height:21px;">36</div><div class="rh" style="top:748px;height:20px;line-height:21px;">37</div><div class="rh" style="top:768px;height:20px;line-height:21px;">38</div><div class="rh" style="top:788px;height:20px;line-height:21px;">39</div><div class="rh" style="top:808px;height:20px;line-height:21px;">40</div><div class="a" style="left:0;top:0;width:1px;height:811px;background:#a8a8a8"></div><div class="a" style="left:0;top:0;width:1838px;height:1px;background:#8e8e8e"></div><div class="a" style="left:33px;top:18px;width:21px;height:30px;background:#bcdcf4;border:2px solid #000;border-left-width:1px;border-top-width:1px"></div><div class="a" style="left:52px;top:45px;width:5px;height:5px;background:#000"></div><div class="a g" style="left:54.66px;top:18.5px;font-size:21px;line-height:28px;white-space:nowrap;letter-spacing:-6.8px;color:#0000ff;-webkit-text-stroke:0.5px #0000ff;">インド</div><div class="a g" style="left:109.66px;top:18.5px;font-size:21px;line-height:28px;white-space:nowrap;letter-spacing:0.45px;color:#0000ff;-webkit-text-stroke:0.5px #0000ff;">占星術</div><div class="a gr" style="left:53px;top:47px;width:84px;height:20px;"></div><div class="a gr" style="left:221px;top:47px;width:84px;height:20px;"></div><div class="a gr" style="left:53px;top:67px;width:84px;height:20px;"></div><div class="a gr" style="left:221px;top:67px;width:84px;height:20px;"></div><div class="a gr" style="left:53px;top:87px;width:84px;height:20px;"></div><div class="a gr" style="left:221px;top:87px;width:84px;height:20px;"></div><div class="a gr" style="left:53px;top:107px;width:84px;height:20px;"></div><div class="a gr" style="left:221px;top:107px;width:84px;height:20px;"></div><div class="a gr" style="left:53px;top:127px;width:84px;height:20px;"></div><div class="a gr" style="left:221px;top:127px;width:84px;height:20px;"></div><div class="a g" style="left:54.4px;top:47.5px;font-size:15px;line-height:20px;white-space:nowrap;letter-spacing:-0.65px;">名前</div><div class="a g" style="left:54.4px;top:67.5px;font-size:15px;line-height:20px;white-space:nowrap;letter-spacing:-0.38px;">生年月日</div><div class="a g" style="left:54.4px;top:87.5px;font-size:15px;line-height:20px;white-space:nowrap;letter-spacing:-0.22px;">出生時刻</div><div class="a g" style="left:54.4px;top:107.5px;font-size:15px;line-height:20px;white-space:nowrap;letter-spacing:-0.22px;">出生場所</div><div class="a g" style="left:54.4px;top:127.5px;font-size:15px;line-height:20px;white-space:nowrap;letter-spacing:-3.32px;">ラグナ</div><div class="a g" style="left:139px;top:47.5px;font-size:15px;line-height:20px;white-space:nowrap;">@</div><div class="a g" style="left:139px;top:67.5px;font-size:15px;line-height:20px;white-space:nowrap;letter-spacing:0.43px;">19820119</div><div class="a g" style="left:139px;top:87.5px;font-size:15px;line-height:20px;white-space:nowrap;letter-spacing:0.33px;">1240</div><div class="a g" style="left:138.4px;top:107.5px;font-size:15px;line-height:20px;white-space:nowrap;letter-spacing:0.35px;">札幌</div><div class="a g" style="left:138.4px;top:127.5px;font-size:15px;line-height:20px;white-space:nowrap;letter-spacing:0.18px;">上昇点</div><div class="a g" style="left:222.4px;top:47.5px;font-size:15px;line-height:20px;white-space:nowrap;letter-spacing:-0.65px;">性別</div><div class="a g" style="left:222.4px;top:107.5px;font-size:15px;line-height:20px;white-space:nowrap;letter-spacing:-0.8px;">北緯(度分)</div><div class="a g" style="left:222.4px;top:127.5px;font-size:15px;line-height:20px;white-space:nowrap;letter-spacing:-0.8px;">東経(度分)</div><div class="a g" style="left:307px;top:47.5px;font-size:15px;line-height:20px;white-space:nowrap;">女</div><div class="a g" style="left:317px;top:107.5px;font-size:15px;font-weight:bold;line-height:20px;white-space:nowrap;letter-spacing:1.5px;">43<span style="font-family:Liberation Sans,sans-serif;font-weight:bold">°</span>04'</div><div class="a g" style="left:308px;top:127.5px;font-size:15px;font-weight:bold;line-height:20px;white-space:nowrap;letter-spacing:1.5px;">141<span style="font-family:Liberation Sans,sans-serif;font-weight:bold">°</span>21'</div><div class="hl" style="left:53px;top:47px;width:337px;"></div><div class="hl" style="left:53px;top:67px;width:337px;"></div><div class="hl" style="left:53px;top:87px;width:337px;"></div><div class="hl" style="left:53px;top:107px;width:337px;"></div><div class="hl" style="left:53px;top:127px;width:337px;"></div><div class="hl" style="left:53px;top:147px;width:337px;"></div><div class="vl" style="left:53px;top:47px;height:101px;"></div><div class="vl" style="left:137px;top:47px;height:101px;"></div><div class="vl" style="left:221px;top:47px;height:101px;"></div><div class="vl" style="left:305px;top:47px;height:101px;"></div><div class="vl" style="left:389px;top:47px;height:101px;"></div><div class="a" style="left:134px;top:68px;width:3px;height:3px;background:#ff0000"></div><div class="a" style="left:134px;top:88px;width:3px;height:3px;background:#ff0000"></div><div class="a gr" style="left:431px;top:47px;width:84px;height:20px;"></div><div class="a g" style="left:432.5px;top:47.5px;font-size:15px;line-height:20px;white-space:nowrap;letter-spacing:-1.36px;">UTCとの時差</div><div class="a g" style="left:535.5px;top:47.5px;font-size:15px;font-weight:bold;line-height:20px;white-space:nowrap;letter-spacing:1.38px;">+9:00</div><div class="b" style="left:431px;top:47px;width:169px;height:21px;"></div><div class="vl" style="left:515px;top:47px;height:21px;"></div><div class="a g" style="left:433px;top:94px;width:149px;height:54px;background:#efefef;border-top:1px solid #fff;border-left:1px solid #fff;border-right:2px solid #8c8c8c;border-bottom:2px solid #8c8c8c;color:#0000ff;font-size:20px;line-height:51px;text-align:center;padding-right:1px">表示</div><div class="a g" style="left:53.4px;top:167.5px;font-size:15px;line-height:20px;white-space:nowrap;letter-spacing:-2.59px;color:#0000ff;-webkit-text-stroke:0.45px #0000ff;">ラーシ・チャート</div><div class="a g" style="left:600.4px;top:408.0px;font-size:15px;line-height:20px;white-space:nowrap;letter-spacing:-2.07px;color:#0000ff;-webkit-text-stroke:0.45px #0000ff;">ナヴァムシャ・チャート</div><div class="a g" style="left:957.4px;top:47.5px;font-size:15px;line-height:20px;white-space:nowrap;letter-spacing:-2.3px;color:#0000ff;-webkit-text-stroke:0.45px #0000ff;">ヴィムショッタリ・ダシャー</div><div class="b" style="left:53px;top:187px;width:505px;height:481px;"></div><div class="b" style="left:179px;top:307px;width:253px;height:241px;"></div><div class="hl" style="left:53px;top:307px;width:127px;"></div><div class="hl" style="left:431px;top:307px;width:127px;"></div><div class="vl" style="left:179px;top:187px;height:121px;"></div><div class="vl" style="left:179px;top:547px;height:121px;"></div><div class="hl" style="left:53px;top:427px;width:127px;"></div><div class="hl" style="left:431px;top:427px;width:127px;"></div><div class="vl" style="left:305px;top:187px;height:121px;"></div><div class="vl" style="left:305px;top:547px;height:121px;"></div><div class="hl" style="left:53px;top:547px;width:127px;"></div><div class="hl" style="left:431px;top:547px;width:127px;"></div><div class="vl" style="left:431px;top:187px;height:121px;"></div><div class="vl" style="left:431px;top:547px;height:121px;"></div><div class="a sym" style="left:56px;top:186px;width:28px;height:24px;color:#0000d0;font-size:19px;line-height:23px;font-weight:bold;-webkit-text-stroke:0.3px #0000d0">♓&#xFE0E;</div><div class="a g" style="left:auto;right:1661.5px;top:187.5px;font-size:15px;font-weight:bold;line-height:20px;white-space:nowrap;letter-spacing:-1.5px;margin-right:1.5px;color:#00b400;">11</div><div class="a sym" style="left:149px;top:266px;width:28px;height:24px;color:#d00000;font-size:19px;line-height:23px;text-align:right;font-weight:bold;-webkit-text-stroke:0.3px #d00000">♃&#xFE0E;</div><div class="a sym" style="left:182px;top:186px;width:28px;height:24px;color:#0000d0;font-size:19px;line-height:23px;font-weight:bold;-webkit-text-stroke:0.3px #0000d0">♈&#xFE0E;</div><div class="a g" style="left:auto;right:1535.5px;top:187.5px;font-size:15px;font-weight:bold;line-height:20px;white-space:nowrap;letter-spacing:-1.5px;margin-right:1.5px;color:#00b400;">12</div><div class="a sym" style="left:275px;top:266px;width:28px;height:24px;color:#d00000;font-size:19px;line-height:23px;text-align:right;font-weight:bold;-webkit-text-stroke:0.3px #d00000">♂&#xFE0E;</div><div class="a sym" style="left:308px;top:186px;width:28px;height:24px;color:#0000d0;font-size:19px;line-height:23px;font-weight:bold;-webkit-text-stroke:0.3px #0000d0">♉&#xFE0E;</div><div class="a g" style="left:auto;right:1409.5px;top:187.5px;font-size:15px;font-weight:bold;line-height:20px;white-space:nowrap;color:#00b400;">1</div><div class="a sym" style="left:401px;top:266px;width:28px;height:24px;color:#d00000;font-size:19px;line-height:23px;text-align:right;font-weight:bold;-webkit-text-stroke:0.3px #d00000">♀&#xFE0E;</div><div class="a g" style="left:328.3px;top:210.0px;font-size:18px;line-height:20px;white-space:nowrap;letter-spacing:1.4px;">As</div><div class="a g" style="left:358px;top:210.5px;font-size:14px;font-weight:bold;line-height:20px;white-space:nowrap;letter-spacing:0.62px;">14:31</div><div class="a sym" style="left:434px;top:186px;width:28px;height:24px;color:#0000d0;font-size:19px;line-height:23px;font-weight:bold;-webkit-text-stroke:0.3px #0000d0">♊&#xFE0E;</div><div class="a g" style="left:auto;right:1283.5px;top:187.5px;font-size:15px;font-weight:bold;line-height:20px;white-space:nowrap;color:#00b400;">2</div><div class="a sym" style="left:527px;top:266px;width:28px;height:24px;color:#d00000;font-size:19px;line-height:23px;text-align:right;font-weight:bold;-webkit-text-stroke:0.3px #d00000">☿&#xFE0E;</div><div class="a g" style="left:454.3px;top:210.0px;font-size:18px;line-height:20px;white-space:nowrap;letter-spacing:1.4px;">Ra</div><div class="a g" style="left:484px;top:210.5px;font-size:14px;font-weight:bold;line-height:20px;white-space:nowrap;letter-spacing:0.62px;">28:51</div><div class="a sym" style="left:56px;top:306px;width:28px;height:24px;color:#0000d0;font-size:19px;line-height:23px;font-weight:bold;-webkit-text-stroke:0.3px #0000d0">♒&#xFE0E;</div><div class="a g" style="left:auto;right:1661.5px;top:307.5px;font-size:15px;font-weight:bold;line-height:20px;white-space:nowrap;letter-spacing:-1.5px;margin-right:1.5px;color:#00b400;">10</div><div class="a sym" style="left:149px;top:386px;width:28px;height:24px;color:#d00000;font-size:19px;line-height:23px;text-align:right;font-weight:bold;-webkit-text-stroke:0.3px #d00000">♄&#xFE0E;</div><div class="a sym" style="left:434px;top:306px;width:28px;height:24px;color:#0000d0;font-size:19px;line-height:23px;font-weight:bold;-webkit-text-stroke:0.3px #0000d0">♋&#xFE0E;</div><div class="a g" style="left:auto;right:1283.5px;top:307.5px;font-size:15px;font-weight:bold;line-height:20px;white-space:nowrap;color:#00b400;">3</div><div class="a sym" style="left:527px;top:386px;width:28px;height:24px;color:#d00000;font-size:19px;line-height:23px;text-align:right;font-weight:bold;-webkit-text-stroke:0.3px #d00000">☽&#xFE0E;</div><div class="a sym" style="left:56px;top:426px;width:28px;height:24px;color:#0000d0;font-size:19px;line-height:23px;font-weight:bold;-webkit-text-stroke:0.3px #0000d0">♑&#xFE0E;</div><div class="a g" style="left:auto;right:1661.5px;top:427.5px;font-size:15px;font-weight:bold;line-height:20px;white-space:nowrap;color:#00b400;">9</div><div class="a sym" style="left:149px;top:506px;width:28px;height:24px;color:#d00000;font-size:19px;line-height:23px;text-align:right;font-weight:bold;-webkit-text-stroke:0.3px #d00000">♄&#xFE0E;</div><div class="a g" style="left:76.3px;top:450.0px;font-size:18px;line-height:20px;white-space:nowrap;letter-spacing:1.4px;">Su</div><div class="a g" style="left:106px;top:450.5px;font-size:14px;font-weight:bold;line-height:20px;white-space:nowrap;letter-spacing:0.62px;">05:08</div><div class="a g" style="left:76.3px;top:470.0px;font-size:18px;line-height:20px;white-space:nowrap;letter-spacing:1.4px;">Me</div><div class="a g" style="left:106px;top:470.5px;font-size:14px;font-weight:bold;line-height:20px;white-space:nowrap;letter-spacing:0.62px;">23:33</div><div class="a g" style="left:76.3px;top:490.0px;font-size:18px;line-height:20px;white-space:nowrap;letter-spacing:1.4px;">Ve</div><div class="a g" style="left:99px;top:490.5px;font-size:13px;font-weight:bold;line-height:20px;white-space:nowrap;color:#0000ff;">R</div><div class="a g" style="left:115.6px;top:490.5px;font-size:14px;font-weight:bold;line-height:20px;white-space:nowrap;letter-spacing:0.62px;">08:50</div><div class="a sym" style="left:434px;top:426px;width:28px;height:24px;color:#0000d0;font-size:19px;line-height:23px;font-weight:bold;-webkit-text-stroke:0.3px #0000d0">♌&#xFE0E;</div><div class="a g" style="left:auto;right:1283.5px;top:427.5px;font-size:15px;font-weight:bold;line-height:20px;white-space:nowrap;color:#00b400;">4</div><div class="a sym" style="left:527px;top:506px;width:28px;height:24px;color:#d00000;font-size:19px;line-height:23px;text-align:right;font-weight:bold;-webkit-text-stroke:0.3px #d00000">☉&#xFE0E;</div><div class="a sym" style="left:56px;top:546px;width:28px;height:24px;color:#0000d0;font-size:19px;line-height:23px;font-weight:bold;-webkit-text-stroke:0.3px #0000d0">♐&#xFE0E;</div><div class="a g" style="left:auto;right:1661.5px;top:547.5px;font-size:15px;font-weight:bold;line-height:20px;white-space:nowrap;color:#00b400;">8</div><div class="a sym" style="left:149px;top:626px;width:28px;height:24px;color:#d00000;font-size:19px;line-height:23px;text-align:right;font-weight:bold;-webkit-text-stroke:0.3px #d00000">♃&#xFE0E;</div><div class="a g" style="left:76.3px;top:570.0px;font-size:18px;line-height:20px;white-space:nowrap;letter-spacing:1.4px;">Ke</div><div class="a g" style="left:106px;top:570.5px;font-size:14px;font-weight:bold;line-height:20px;white-space:nowrap;letter-spacing:0.62px;">28:51</div><div class="a sym" style="left:182px;top:546px;width:28px;height:24px;color:#0000d0;font-size:19px;line-height:23px;font-weight:bold;-webkit-text-stroke:0.3px #0000d0">♏&#xFE0E;</div><div class="a g" style="left:auto;right:1535.5px;top:547.5px;font-size:15px;font-weight:bold;line-height:20px;white-space:nowrap;color:#00b400;">7</div><div class="a sym" style="left:275px;top:626px;width:28px;height:24px;color:#d00000;font-size:19px;line-height:23px;text-align:right;font-weight:bold;-webkit-text-stroke:0.3px #d00000">♂&#xFE0E;</div><div class="a sym" style="left:308px;top:546px;width:28px;height:24px;color:#0000d0;font-size:19px;line-height:23px;font-weight:bold;-webkit-text-stroke:0.3px #0000d0">♎&#xFE0E;</div><div class="a g" style="left:auto;right:1409.5px;top:547.5px;font-size:15px;font-weight:bold;line-height:20px;white-space:nowrap;color:#00b400;">6</div><div class="a sym" style="left:401px;top:626px;width:28px;height:24px;color:#d00000;font-size:19px;line-height:23px;text-align:right;font-weight:bold;-webkit-text-stroke:0.3px #d00000">♀&#xFE0E;</div><div class="a g" style="left:328.3px;top:570.0px;font-size:18px;line-height:20px;white-space:nowrap;letter-spacing:1.4px;">Mo</div><div class="a g" style="left:358px;top:570.5px;font-size:14px;font-weight:bold;line-height:20px;white-space:nowrap;letter-spacing:0.62px;">28:50</div><div class="a g" style="left:328.3px;top:590.0px;font-size:18px;line-height:20px;white-space:nowrap;letter-spacing:1.4px;">Ju</div><div class="a g" style="left:358px;top:590.5px;font-size:14px;font-weight:bold;line-height:20px;white-space:nowrap;letter-spacing:0.62px;">14:46</div><div class="a sym" style="left:434px;top:546px;width:28px;height:24px;color:#0000d0;font-size:19px;line-height:23px;font-weight:bold;-webkit-text-stroke:0.3px #0000d0">♍&#xFE0E;</div><div class="a g" style="left:auto;right:1283.5px;top:547.5px;font-size:15px;font-weight:bold;line-height:20px;white-space:nowrap;color:#00b400;">5</div><div class="a sym" style="left:527px;top:626px;width:28px;height:24px;color:#d00000;font-size:19px;line-height:23px;text-align:right;font-weight:bold;-webkit-text-stroke:0.3px #d00000">☿&#xFE0E;</div><div class="a g" style="left:454.3px;top:570.0px;font-size:18px;line-height:20px;white-space:nowrap;letter-spacing:1.4px;">Ma</div><div class="a g" style="left:484px;top:570.5px;font-size:14px;font-weight:bold;line-height:20px;white-space:nowrap;letter-spacing:0.62px;">20:02</div><div class="a g" style="left:454.3px;top:590.0px;font-size:18px;line-height:20px;white-space:nowrap;letter-spacing:1.4px;">Sa</div><div class="a g" style="left:484px;top:590.5px;font-size:14px;font-weight:bold;line-height:20px;white-space:nowrap;letter-spacing:0.62px;">28:31</div><div class="a gr" style="left:641px;top:167px;width:252px;height:20px;"></div><div class="a g" style="left:642.9px;top:167.5px;font-size:15px;line-height:20px;white-space:nowrap;letter-spacing:-0.07px;">感受点</div><div class="a g" style="left:706.4px;top:167.5px;font-size:15px;line-height:20px;white-space:nowrap;letter-spacing:-2.82px;">サイン</div><div class="a g" style="left:810.9px;top:167.5px;font-size:15px;line-height:20px;white-space:nowrap;letter-spacing:0.35px;">度数</div><div class="a g" style="left:601px;top:188.0px;font-size:17px;line-height:20px;white-space:nowrap;letter-spacing:0.0px;-webkit-text-stroke:0.35px #000;">As</div><div class="a g" style="left:642.9px;top:187.5px;font-size:15px;line-height:20px;white-space:nowrap;letter-spacing:-0.07px;">上昇点</div><div class="a sym" style="left:707px;top:186.0px;width:30px;height:22px;font-size:18px;line-height:22px;font-weight:bold;-webkit-text-stroke:0.5px #000">♉&#xFE0E;</div><div class="a g" style="left:747.9px;top:187.5px;font-size:15px;line-height:20px;white-space:nowrap;letter-spacing:-0.07px;">牡牛座</div><div class="a g" style="left:820.8px;top:187.5px;font-size:15px;line-height:20px;white-space:nowrap;letter-spacing:0.39px;">14&nbsp;30'48"</div><div class="a g" style="left:601px;top:208.0px;font-size:17px;line-height:20px;white-space:nowrap;letter-spacing:0.0px;-webkit-text-stroke:0.35px #000;">Su</div><div class="a g" style="left:642.9px;top:207.5px;font-size:15px;line-height:20px;white-space:nowrap;letter-spacing:-0.15px;">太陽</div><div class="a sym" style="left:707px;top:206.0px;width:30px;height:22px;font-size:18px;line-height:22px;font-weight:bold;-webkit-text-stroke:0.5px #000">♑&#xFE0E;</div><div class="a g" style="left:747.9px;top:207.5px;font-size:15px;line-height:20px;white-space:nowrap;letter-spacing:-0.07px;">山羊座</div><div class="a g" style="left:820.8px;top:207.5px;font-size:15px;line-height:20px;white-space:nowrap;letter-spacing:0.39px;">&nbsp;5&nbsp;08'26"</div><div class="a g" style="left:601px;top:228.0px;font-size:17px;line-height:20px;white-space:nowrap;letter-spacing:0.0px;-webkit-text-stroke:0.35px #000;">Mo</div><div class="a g" style="left:643.5px;top:227.5px;font-size:15px;line-height:20px;white-space:nowrap;">月</div><div class="a sym" style="left:707px;top:226.0px;width:30px;height:22px;font-size:18px;line-height:22px;font-weight:bold;-webkit-text-stroke:0.5px #000">♎&#xFE0E;</div><div class="a g" style="left:747.9px;top:227.5px;font-size:15px;line-height:20px;white-space:nowrap;letter-spacing:-0.07px;">天秤座</div><div class="a g" style="left:820.8px;top:227.5px;font-size:15px;line-height:20px;white-space:nowrap;letter-spacing:0.39px;">28&nbsp;50'11"</div><div class="a g" style="left:601px;top:248.0px;font-size:17px;line-height:20px;white-space:nowrap;letter-spacing:0.0px;-webkit-text-stroke:0.35px #000;">Ma</div><div class="a g" style="left:642.9px;top:247.5px;font-size:15px;line-height:20px;white-space:nowrap;letter-spacing:-0.15px;">火星</div><div class="a sym" style="left:707px;top:246.0px;width:30px;height:22px;font-size:18px;line-height:22px;font-weight:bold;-webkit-text-stroke:0.5px #000">♍&#xFE0E;</div><div class="a g" style="left:747.9px;top:247.5px;font-size:15px;line-height:20px;white-space:nowrap;letter-spacing:-0.07px;">乙女座</div><div class="a g" style="left:820.8px;top:247.5px;font-size:15px;line-height:20px;white-space:nowrap;letter-spacing:0.39px;">20&nbsp;01'57"</div><div class="a g" style="left:601px;top:268.0px;font-size:17px;line-height:20px;white-space:nowrap;letter-spacing:0.0px;-webkit-text-stroke:0.35px #000;">Me</div><div class="a g" style="left:642.9px;top:267.5px;font-size:15px;line-height:20px;white-space:nowrap;letter-spacing:-0.15px;">水星</div><div class="a sym" style="left:707px;top:266.0px;width:30px;height:22px;font-size:18px;line-height:22px;font-weight:bold;-webkit-text-stroke:0.5px #000">♑&#xFE0E;</div><div class="a g" style="left:747.9px;top:267.5px;font-size:15px;line-height:20px;white-space:nowrap;letter-spacing:-0.07px;">山羊座</div><div class="a g" style="left:820.8px;top:267.5px;font-size:15px;line-height:20px;white-space:nowrap;letter-spacing:0.39px;">23&nbsp;33'27"</div><div class="a g" style="left:601px;top:288.0px;font-size:17px;line-height:20px;white-space:nowrap;letter-spacing:0.0px;-webkit-text-stroke:0.35px #000;">Ju</div><div class="a g" style="left:642.9px;top:287.5px;font-size:15px;line-height:20px;white-space:nowrap;letter-spacing:-0.15px;">木星</div><div class="a sym" style="left:707px;top:286.0px;width:30px;height:22px;font-size:18px;line-height:22px;font-weight:bold;-webkit-text-stroke:0.5px #000">♎&#xFE0E;</div><div class="a g" style="left:747.9px;top:287.5px;font-size:15px;line-height:20px;white-space:nowrap;letter-spacing:-0.07px;">天秤座</div><div class="a g" style="left:820.8px;top:287.5px;font-size:15px;line-height:20px;white-space:nowrap;letter-spacing:0.39px;">14&nbsp;45'56"</div><div class="a g" style="left:601px;top:308.0px;font-size:17px;line-height:20px;white-space:nowrap;letter-spacing:0.0px;-webkit-text-stroke:0.35px #000;">Ve</div><div class="a g" style="left:642.9px;top:307.5px;font-size:15px;line-height:20px;white-space:nowrap;letter-spacing:-0.15px;">金星</div><div class="a sym" style="left:707px;top:306.0px;width:30px;height:22px;font-size:18px;line-height:22px;font-weight:bold;-webkit-text-stroke:0.5px #000">♑&#xFE0E;</div><div class="a g" style="left:747.9px;top:307.5px;font-size:15px;line-height:20px;white-space:nowrap;letter-spacing:-0.07px;">山羊座</div><div class="a g" style="left:820.8px;top:307.5px;font-size:15px;line-height:20px;white-space:nowrap;letter-spacing:0.39px;">&nbsp;8&nbsp;50'00"</div><div class="a g" style="left:601px;top:328.0px;font-size:17px;line-height:20px;white-space:nowrap;letter-spacing:0.0px;-webkit-text-stroke:0.35px #000;">Sa</div><div class="a g" style="left:642.9px;top:327.5px;font-size:15px;line-height:20px;white-space:nowrap;letter-spacing:-0.15px;">土星</div><div class="a sym" style="left:707px;top:326.0px;width:30px;height:22px;font-size:18px;line-height:22px;font-weight:bold;-webkit-text-stroke:0.5px #000">♍&#xFE0E;</div><div class="a g" style="left:747.9px;top:327.5px;font-size:15px;line-height:20px;white-space:nowrap;letter-spacing:-0.07px;">乙女座</div><div class="a g" style="left:820.8px;top:327.5px;font-size:15px;line-height:20px;white-space:nowrap;letter-spacing:0.39px;">28&nbsp;31'14"</div><div class="a g" style="left:601px;top:348.0px;font-size:17px;line-height:20px;white-space:nowrap;letter-spacing:0.0px;-webkit-text-stroke:0.35px #000;">Ra</div><div class="a g" style="left:642.9px;top:347.5px;font-size:15px;line-height:20px;white-space:nowrap;letter-spacing:-5.82px;">ラーフ</div><div class="a sym" style="left:707px;top:346.0px;width:30px;height:22px;font-size:18px;line-height:22px;font-weight:bold;-webkit-text-stroke:0.5px #000">♊&#xFE0E;</div><div class="a g" style="left:747.9px;top:347.5px;font-size:15px;line-height:20px;white-space:nowrap;letter-spacing:-0.07px;">双子座</div><div class="a g" style="left:820.8px;top:347.5px;font-size:15px;line-height:20px;white-space:nowrap;letter-spacing:0.39px;">28&nbsp;50'34"</div><div class="a g" style="left:601px;top:368.0px;font-size:17px;line-height:20px;white-space:nowrap;letter-spacing:0.0px;-webkit-text-stroke:0.35px #000;">Ke</div><div class="a g" style="left:642.9px;top:367.5px;font-size:15px;line-height:20px;white-space:nowrap;letter-spacing:-5.98px;">ケートゥ</div><div class="a sym" style="left:707px;top:366.0px;width:30px;height:22px;font-size:18px;line-height:22px;font-weight:bold;-webkit-text-stroke:0.5px #000">♐&#xFE0E;</div><div class="a g" style="left:747.9px;top:367.5px;font-size:15px;line-height:20px;white-space:nowrap;letter-spacing:-0.07px;">射手座</div><div class="a g" style="left:820.8px;top:367.5px;font-size:15px;line-height:20px;white-space:nowrap;letter-spacing:0.39px;">28&nbsp;50'34"</div><div class="a g" style="left:896px;top:307.5px;font-size:14px;line-height:20px;white-space:nowrap;">R</div><div class="b" style="left:641px;top:167px;width:253px;height:21px;"></div><div class="b" style="left:599px;top:187px;width:295px;height:201px;"></div><div class="hl" style="left:599px;top:207px;width:295px;"></div><div class="hl" style="left:599px;top:227px;width:295px;"></div><div class="hl" style="left:599px;top:247px;width:295px;"></div><div class="hl" style="left:599px;top:267px;width:295px;"></div><div class="hl" style="left:599px;top:287px;width:295px;"></div><div class="hl" style="left:599px;top:307px;width:295px;"></div><div class="hl" style="left:599px;top:327px;width:295px;"></div><div class="hl" style="left:599px;top:347px;width:295px;"></div><div class="hl" style="left:599px;top:367px;width:295px;"></div><div class="vl" style="left:641px;top:187px;height:201px;"></div><div class="vl" style="left:704px;top:167px;height:221px;"></div><div class="vl" style="left:746px;top:187px;height:201px;"></div><div class="vl" style="left:809px;top:167px;height:221px;"></div><div class="b" style="left:599px;top:427px;width:253px;height:241px;"></div><div class="b" style="left:662px;top:487px;width:127px;height:121px;"></div><div class="hl" style="left:599px;top:487px;width:64px;"></div><div class="hl" style="left:788px;top:487px;width:64px;"></div><div class="vl" style="left:662px;top:427px;height:61px;"></div><div class="vl" style="left:662px;top:607px;height:61px;"></div><div class="hl" style="left:599px;top:547px;width:64px;"></div><div class="hl" style="left:788px;top:547px;width:64px;"></div><div class="vl" style="left:725px;top:427px;height:61px;"></div><div class="vl" style="left:725px;top:607px;height:61px;"></div><div class="hl" style="left:599px;top:607px;width:64px;"></div><div class="hl" style="left:788px;top:607px;width:64px;"></div><div class="vl" style="left:788px;top:427px;height:61px;"></div><div class="vl" style="left:788px;top:607px;height:61px;"></div><div class="a g" style="left:601px;top:429.0px;font-size:17px;line-height:20px;white-space:nowrap;letter-spacing:0.0px;-webkit-text-stroke:0.3px #000;">Ve</div><div class="a g" style="left:619px;top:429.5px;font-size:13px;font-weight:bold;line-height:20px;white-space:nowrap;color:#0000ff;">R</div><div class="a g" style="left:727px;top:429.0px;font-size:17px;line-height:20px;white-space:nowrap;letter-spacing:0.5px;-webkit-text-stroke:0.3px #000;">As</div><div class="a g" style="left:790px;top:429.0px;font-size:17px;line-height:20px;white-space:nowrap;letter-spacing:0.5px;-webkit-text-stroke:0.3px #000;">Mo</div><div class="a g" style="left:790px;top:449.0px;font-size:17px;line-height:20px;white-space:nowrap;letter-spacing:0.5px;-webkit-text-stroke:0.3px #000;">Ra</div><div class="a g" style="left:601px;top:489.0px;font-size:17px;line-height:20px;white-space:nowrap;letter-spacing:0.5px;-webkit-text-stroke:0.3px #000;">Su</div><div class="a g" style="left:601px;top:509.0px;font-size:17px;line-height:20px;white-space:nowrap;letter-spacing:0.5px;-webkit-text-stroke:0.3px #000;">Ju</div><div class="a g" style="left:790px;top:489.0px;font-size:17px;line-height:20px;white-space:nowrap;letter-spacing:0.5px;-webkit-text-stroke:0.3px #000;">Ma</div><div class="a g" style="left:790px;top:549.0px;font-size:17px;line-height:20px;white-space:nowrap;letter-spacing:0.5px;-webkit-text-stroke:0.3px #000;">Me</div><div class="a g" style="left:601px;top:609.0px;font-size:17px;line-height:20px;white-space:nowrap;letter-spacing:0.5px;-webkit-text-stroke:0.3px #000;">Ke</div><div class="a g" style="left:790px;top:609.0px;font-size:17px;line-height:20px;white-space:nowrap;letter-spacing:0.5px;-webkit-text-stroke:0.3px #000;">Sa</div><div class="a g" style="left:auto;right:884px;top:67.5px;font-size:15px;line-height:20px;white-space:nowrap;">1</div><div class="a g" style="left:956.94px;top:67.5px;font-size:14px;line-height:20px;white-space:nowrap;letter-spacing:-0.74px;">木星</div><div class="a g" style="left:1019.94px;top:67.5px;font-size:14px;line-height:20px;white-space:nowrap;letter-spacing:-0.74px;">太陽</div><div class="a g" style="left:1084px;top:67.5px;font-size:14px;line-height:20px;white-space:nowrap;letter-spacing:-0.21px;">19811225</div><div class="a g" style="left:auto;right:884px;top:87.5px;font-size:15px;line-height:20px;white-space:nowrap;">2</div><div class="a g" style="left:956.94px;top:87.5px;font-size:14px;line-height:20px;white-space:nowrap;letter-spacing:-0.74px;">木星</div><div class="a g" style="left:1020.5px;top:87.5px;font-size:14px;line-height:20px;white-space:nowrap;">月</div><div class="a g" style="left:1084px;top:87.5px;font-size:14px;line-height:20px;white-space:nowrap;letter-spacing:-0.21px;">19821013</div><div class="a g" style="left:auto;right:884px;top:107.5px;font-size:15px;line-height:20px;white-space:nowrap;">3</div><div class="a g" style="left:956.94px;top:107.5px;font-size:14px;line-height:20px;white-space:nowrap;letter-spacing:-0.74px;">木星</div><div class="a g" style="left:1019.94px;top:107.5px;font-size:14px;line-height:20px;white-space:nowrap;letter-spacing:-0.74px;">火星</div><div class="a g" style="left:1084px;top:107.5px;font-size:14px;line-height:20px;white-space:nowrap;letter-spacing:-0.21px;">19840211</div><div class="a g" style="left:auto;right:884px;top:127.5px;font-size:15px;line-height:20px;white-space:nowrap;">4</div><div class="a g" style="left:956.94px;top:127.5px;font-size:14px;line-height:20px;white-space:nowrap;letter-spacing:-0.74px;">木星</div><div class="a g" style="left:1019.94px;top:127.5px;font-size:14px;line-height:20px;white-space:nowrap;letter-spacing:-0.37px;">ラーフ</div><div class="a g" style="left:1084px;top:127.5px;font-size:14px;line-height:20px;white-space:nowrap;letter-spacing:-0.21px;">19850117</div><div class="a g" style="left:auto;right:884px;top:147.5px;font-size:15px;line-height:20px;white-space:nowrap;">5</div><div class="a g" style="left:auto;right:884px;top:167.5px;font-size:15px;line-height:20px;white-space:nowrap;">6</div><div class="a g" style="left:956.94px;top:167.5px;font-size:14px;line-height:20px;white-space:nowrap;letter-spacing:-0.74px;">土星</div><div class="a g" style="left:1019.94px;top:167.5px;font-size:14px;line-height:20px;white-space:nowrap;letter-spacing:-0.74px;">土星</div><div class="a g" style="left:1084px;top:167.5px;font-size:14px;line-height:20px;white-space:nowrap;letter-spacing:-0.21px;">19870616</div><div class="a g" style="left:auto;right:884px;top:187.5px;font-size:15px;line-height:20px;white-space:nowrap;">7</div><div class="a g" style="left:956.94px;top:187.5px;font-size:14px;line-height:20px;white-space:nowrap;letter-spacing:-0.74px;">土星</div><div class="a g" style="left:1019.94px;top:187.5px;font-size:14px;line-height:20px;white-space:nowrap;letter-spacing:-0.74px;">水星</div><div class="a g" style="left:1084px;top:187.5px;font-size:14px;line-height:20px;white-space:nowrap;letter-spacing:-0.21px;">19900618</div><div class="a g" style="left:auto;right:884px;top:207.5px;font-size:15px;line-height:20px;white-space:nowrap;">8</div><div class="a g" style="left:956.94px;top:207.5px;font-size:14px;line-height:20px;white-space:nowrap;letter-spacing:-0.74px;">土星</div><div class="a g" style="left:1019.94px;top:207.5px;font-size:14px;line-height:20px;white-space:nowrap;letter-spacing:-0.25px;">ケートゥ</div><div class="a g" style="left:1084px;top:207.5px;font-size:14px;line-height:20px;white-space:nowrap;letter-spacing:-0.21px;">19930225</div><div class="a g" style="left:auto;right:884px;top:227.5px;font-size:15px;line-height:20px;white-space:nowrap;">9</div><div class="a g" style="left:956.94px;top:227.5px;font-size:14px;line-height:20px;white-space:nowrap;letter-spacing:-0.74px;">土星</div><div class="a g" style="left:1019.94px;top:227.5px;font-size:14px;line-height:20px;white-space:nowrap;letter-spacing:-0.74px;">金星</div><div class="a g" style="left:1084px;top:227.5px;font-size:14px;line-height:20px;white-space:nowrap;letter-spacing:-0.21px;">19940405</div><div class="a g" style="left:auto;right:884px;top:247.5px;font-size:15px;line-height:20px;white-space:nowrap;letter-spacing:0.5px;margin-right:-0.5px;">10</div><div class="a g" style="left:956.94px;top:247.5px;font-size:14px;line-height:20px;white-space:nowrap;letter-spacing:-0.74px;">土星</div><div class="a g" style="left:1019.94px;top:247.5px;font-size:14px;line-height:20px;white-space:nowrap;letter-spacing:-0.74px;">太陽</div><div class="a g" style="left:1084px;top:247.5px;font-size:14px;line-height:20px;white-space:nowrap;letter-spacing:-0.21px;">19970604</div><div class="a g" style="left:auto;right:884px;top:267.5px;font-size:15px;line-height:20px;white-space:nowrap;letter-spacing:0.5px;margin-right:-0.5px;">11</div><div class="a g" style="left:956.94px;top:267.5px;font-size:14px;line-height:20px;white-space:nowrap;letter-spacing:-0.74px;">土星</div><div class="a g" style="left:1020.5px;top:267.5px;font-size:14px;line-height:20px;white-space:nowrap;">月</div><div class="a g" style="left:1084px;top:267.5px;font-size:14px;line-height:20px;white-space:nowrap;letter-spacing:-0.21px;">19980517</div><div class="a g" style="left:auto;right:884px;top:287.5px;font-size:15px;line-height:20px;white-space:nowrap;letter-spacing:0.5px;margin-right:-0.5px;">12</div><div class="a g" style="left:956.94px;top:287.5px;font-size:14px;line-height:20px;white-space:nowrap;letter-spacing:-0.74px;">土星</div><div class="a g" style="left:1019.94px;top:287.5px;font-size:14px;line-height:20px;white-space:nowrap;letter-spacing:-0.74px;">火星</div><div class="a g" style="left:1084px;top:287.5px;font-size:14px;line-height:20px;white-space:nowrap;letter-spacing:-0.21px;">19991216</div><div class="a g" style="left:auto;right:884px;top:307.5px;font-size:15px;line-height:20px;white-space:nowrap;letter-spacing:0.5px;margin-right:-0.5px;">13</div><div class="a g" style="left:956.94px;top:307.5px;font-size:14px;line-height:20px;white-space:nowrap;letter-spacing:-0.74px;">土星</div><div class="a g" style="left:1019.94px;top:307.5px;font-size:14px;line-height:20px;white-space:nowrap;letter-spacing:-0.37px;">ラーフ</div><div class="a g" style="left:1084px;top:307.5px;font-size:14px;line-height:20px;white-space:nowrap;letter-spacing:-0.21px;">20010123</div><div class="a g" style="left:auto;right:884px;top:327.5px;font-size:15px;line-height:20px;white-space:nowrap;letter-spacing:0.5px;margin-right:-0.5px;">14</div><div class="a g" style="left:956.94px;top:327.5px;font-size:14px;line-height:20px;white-space:nowrap;letter-spacing:-0.74px;">土星</div><div class="a g" style="left:1019.94px;top:327.5px;font-size:14px;line-height:20px;white-space:nowrap;letter-spacing:-0.74px;">木星</div><div class="a g" style="left:1084px;top:327.5px;font-size:14px;line-height:20px;white-space:nowrap;letter-spacing:-0.21px;">20031129</div><div class="a g" style="left:auto;right:884px;top:347.5px;font-size:15px;line-height:20px;white-space:nowrap;letter-spacing:0.5px;margin-right:-0.5px;">15</div><div class="a g" style="left:auto;right:884px;top:367.5px;font-size:15px;line-height:20px;white-space:nowrap;letter-spacing:0.5px;margin-right:-0.5px;">16</div><div class="a g" style="left:956.94px;top:367.5px;font-size:14px;line-height:20px;white-space:nowrap;letter-spacing:-0.74px;">水星</div><div class="a g" style="left:1019.94px;top:367.5px;font-size:14px;line-height:20px;white-space:nowrap;letter-spacing:-0.74px;">水星</div><div class="a g" style="left:1084px;top:367.5px;font-size:14px;line-height:20px;white-space:nowrap;letter-spacing:-0.21px;">20060616</div><div class="a g" style="left:auto;right:884px;top:387.5px;font-size:15px;line-height:20px;white-space:nowrap;letter-spacing:0.5px;margin-right:-0.5px;">17</div><div class="a g" style="left:956.94px;top:387.5px;font-size:14px;line-height:20px;white-space:nowrap;letter-spacing:-0.74px;">水星</div><div class="a g" style="left:1019.94px;top:387.5px;font-size:14px;line-height:20px;white-space:nowrap;letter-spacing:-0.25px;">ケートゥ</div><div class="a g" style="left:1084px;top:387.5px;font-size:14px;line-height:20px;white-space:nowrap;letter-spacing:-0.21px;">20081111</div><div class="a g" style="left:auto;right:884px;top:407.5px;font-size:15px;line-height:20px;white-space:nowrap;letter-spacing:0.5px;margin-right:-0.5px;">18</div><div class="a g" style="left:956.94px;top:407.5px;font-size:14px;line-height:20px;white-space:nowrap;letter-spacing:-0.74px;">水星</div><div class="a g" style="left:1019.94px;top:407.5px;font-size:14px;line-height:20px;white-space:nowrap;letter-spacing:-0.74px;">金星</div><div class="a g" style="left:1084px;top:407.5px;font-size:14px;line-height:20px;white-space:nowrap;letter-spacing:-0.21px;">20091108</div><div class="a g" style="left:auto;right:884px;top:427.5px;font-size:15px;line-height:20px;white-space:nowrap;letter-spacing:0.5px;margin-right:-0.5px;">19</div><div class="a g" style="left:956.94px;top:427.5px;font-size:14px;line-height:20px;white-space:nowrap;letter-spacing:-0.74px;">水星</div><div class="a g" style="left:1019.94px;top:427.5px;font-size:14px;line-height:20px;white-space:nowrap;letter-spacing:-0.74px;">太陽</div><div class="a g" style="left:1084px;top:427.5px;font-size:14px;line-height:20px;white-space:nowrap;letter-spacing:-0.21px;">20120907</div><div class="a g" style="left:auto;right:884px;top:447.5px;font-size:15px;line-height:20px;white-space:nowrap;letter-spacing:0.5px;margin-right:-0.5px;">20</div><div class="a g" style="left:956.94px;top:447.5px;font-size:14px;line-height:20px;white-space:nowrap;letter-spacing:-0.74px;">水星</div><div class="a g" style="left:1020.5px;top:447.5px;font-size:14px;line-height:20px;white-space:nowrap;">月</div><div class="a g" style="left:1084px;top:447.5px;font-size:14px;line-height:20px;white-space:nowrap;letter-spacing:-0.21px;">20130715</div><div class="a g" style="left:auto;right:884px;top:467.5px;font-size:15px;line-height:20px;white-space:nowrap;letter-spacing:0.5px;margin-right:-0.5px;">21</div><div class="a g" style="left:956.94px;top:467.5px;font-size:14px;line-height:20px;white-space:nowrap;letter-spacing:-0.74px;">水星</div><div class="a g" style="left:1019.94px;top:467.5px;font-size:14px;line-height:20px;white-space:nowrap;letter-spacing:-0.74px;">火星</div><div class="a g" style="left:1084px;top:467.5px;font-size:14px;line-height:20px;white-space:nowrap;letter-spacing:-0.21px;">20141214</div><div class="a g" style="left:auto;right:884px;top:487.5px;font-size:15px;line-height:20px;white-space:nowrap;letter-spacing:0.5px;margin-right:-0.5px;">22</div><div class="a g" style="left:956.94px;top:487.5px;font-size:14px;line-height:20px;white-space:nowrap;letter-spacing:-0.74px;">水星</div><div class="a g" style="left:1019.94px;top:487.5px;font-size:14px;line-height:20px;white-space:nowrap;letter-spacing:-0.37px;">ラーフ</div><div class="a g" style="left:1084px;top:487.5px;font-size:14px;line-height:20px;white-space:nowrap;letter-spacing:-0.21px;">20151211</div><div class="a g" style="left:auto;right:884px;top:507.5px;font-size:15px;line-height:20px;white-space:nowrap;letter-spacing:0.5px;margin-right:-0.5px;">23</div><div class="a g" style="left:956.94px;top:507.5px;font-size:14px;line-height:20px;white-space:nowrap;letter-spacing:-0.74px;">水星</div><div class="a g" style="left:1019.94px;top:507.5px;font-size:14px;line-height:20px;white-space:nowrap;letter-spacing:-0.74px;">木星</div><div class="a g" style="left:1084px;top:507.5px;font-size:14px;line-height:20px;white-space:nowrap;letter-spacing:-0.21px;">20180628</div><div class="a g" style="left:auto;right:884px;top:527.5px;font-size:15px;line-height:20px;white-space:nowrap;letter-spacing:0.5px;margin-right:-0.5px;">24</div><div class="a g" style="left:956.94px;top:527.5px;font-size:14px;line-height:20px;white-space:nowrap;letter-spacing:-0.74px;">水星</div><div class="a g" style="left:1019.94px;top:527.5px;font-size:14px;line-height:20px;white-space:nowrap;letter-spacing:-0.74px;">土星</div><div class="a g" style="left:1084px;top:527.5px;font-size:14px;line-height:20px;white-space:nowrap;letter-spacing:-0.21px;">20201003</div><div class="a g" style="left:auto;right:884px;top:547.5px;font-size:15px;line-height:20px;white-space:nowrap;letter-spacing:0.5px;margin-right:-0.5px;">25</div><div class="a g" style="left:auto;right:884px;top:567.5px;font-size:15px;line-height:20px;white-space:nowrap;letter-spacing:0.5px;margin-right:-0.5px;">26</div><div class="a g" style="left:956.94px;top:567.5px;font-size:14px;line-height:20px;white-space:nowrap;letter-spacing:-0.25px;">ケートゥ</div><div class="a g" style="left:1019.94px;top:567.5px;font-size:14px;line-height:20px;white-space:nowrap;letter-spacing:-0.25px;">ケートゥ</div><div class="a g" style="left:1084px;top:567.5px;font-size:14px;line-height:20px;white-space:nowrap;letter-spacing:-0.21px;">20230616</div><div class="a g" style="left:auto;right:884px;top:587.5px;font-size:15px;line-height:20px;white-space:nowrap;letter-spacing:0.5px;margin-right:-0.5px;">27</div><div class="a g" style="left:956.94px;top:587.5px;font-size:14px;line-height:20px;white-space:nowrap;letter-spacing:-0.25px;">ケートゥ</div><div class="a g" style="left:1019.94px;top:587.5px;font-size:14px;line-height:20px;white-space:nowrap;letter-spacing:-0.74px;">金星</div><div class="a g" style="left:1084px;top:587.5px;font-size:14px;line-height:20px;white-space:nowrap;letter-spacing:-0.21px;">20231112</div><div class="a g" style="left:auto;right:884px;top:607.5px;font-size:15px;line-height:20px;white-space:nowrap;letter-spacing:0.5px;margin-right:-0.5px;">28</div><div class="a g" style="left:956.94px;top:607.5px;font-size:14px;line-height:20px;white-space:nowrap;letter-spacing:-0.25px;">ケートゥ</div><div class="a g" style="left:1019.94px;top:607.5px;font-size:14px;line-height:20px;white-space:nowrap;letter-spacing:-0.74px;">太陽</div><div class="a g" style="left:1084px;top:607.5px;font-size:14px;line-height:20px;white-space:nowrap;letter-spacing:-0.21px;">20250111</div><div class="a g" style="left:auto;right:884px;top:627.5px;font-size:15px;line-height:20px;white-space:nowrap;letter-spacing:0.5px;margin-right:-0.5px;">29</div><div class="a g" style="left:956.94px;top:627.5px;font-size:14px;line-height:20px;white-space:nowrap;letter-spacing:-0.25px;">ケートゥ</div><div class="a g" style="left:1020.5px;top:627.5px;font-size:14px;line-height:20px;white-space:nowrap;">月</div><div class="a g" style="left:1084px;top:627.5px;font-size:14px;line-height:20px;white-space:nowrap;letter-spacing:-0.21px;">20250519</div><div class="a g" style="left:auto;right:884px;top:647.5px;font-size:15px;line-height:20px;white-space:nowrap;letter-spacing:0.5px;margin-right:-0.5px;">30</div><div class="a g" style="left:956.94px;top:647.5px;font-size:14px;line-height:20px;white-space:nowrap;letter-spacing:-0.25px;">ケートゥ</div><div class="a g" style="left:1019.94px;top:647.5px;font-size:14px;line-height:20px;white-space:nowrap;letter-spacing:-0.74px;">火星</div><div class="a g" style="left:1084px;top:647.5px;font-size:14px;line-height:20px;white-space:nowrap;letter-spacing:-0.21px;">20251218</div><div class="b" style="left:956px;top:67px;width:190px;height:601px;"></div><div class="hl" style="left:956px;top:87px;width:190px;"></div><div class="hl" style="left:956px;top:107px;width:190px;"></div><div class="hl" style="left:956px;top:127px;width:190px;"></div><div class="hl" style="left:956px;top:147px;width:190px;"></div><div class="hl" style="left:956px;top:167px;width:190px;"></div><div class="hl" style="left:956px;top:187px;width:190px;"></div><div class="hl" style="left:956px;top:207px;width:190px;"></div><div class="hl" style="left:956px;top:227px;width:190px;"></div><div class="hl" style="left:956px;top:247px;width:190px;"></div><div class="hl" style="left:956px;top:267px;width:190px;"></div><div class="hl" style="left:956px;top:287px;width:190px;"></div><div class="hl" style="left:956px;top:307px;width:190px;"></div><div class="hl" style="left:956px;top:327px;width:190px;"></div><div class="hl" style="left:956px;top:347px;width:190px;"></div><div class="hl" style="left:956px;top:367px;width:190px;"></div><div class="hl" style="left:956px;top:387px;width:190px;"></div><div class="hl" style="left:956px;top:407px;width:190px;"></div><div class="hl" style="left:956px;top:427px;width:190px;"></div><div class="hl" style="left:956px;top:447px;width:190px;"></div><div class="hl" style="left:956px;top:467px;width:190px;"></div><div class="hl" style="left:956px;top:487px;width:190px;"></div><div class="hl" style="left:956px;top:507px;width:190px;"></div><div class="hl" style="left:956px;top:527px;width:190px;"></div><div class="hl" style="left:956px;top:547px;width:190px;"></div><div class="hl" style="left:956px;top:567px;width:190px;"></div><div class="hl" style="left:956px;top:587px;width:190px;"></div><div class="hl" style="left:956px;top:607px;width:190px;"></div><div class="hl" style="left:956px;top:627px;width:190px;"></div><div class="hl" style="left:956px;top:647px;width:190px;"></div><div class="vl" style="left:1019px;top:67px;height:601px;"></div><div class="vl" style="left:1082px;top:67px;height:601px;"></div><div class="a g" style="left:auto;right:653px;top:67.5px;font-size:15px;line-height:20px;white-space:nowrap;letter-spacing:0.5px;margin-right:-0.5px;">31</div><div class="a g" style="left:1187.94px;top:67.5px;font-size:14px;line-height:20px;white-space:nowrap;letter-spacing:-0.25px;">ケートゥ</div><div class="a g" style="left:1250.94px;top:67.5px;font-size:14px;line-height:20px;white-space:nowrap;letter-spacing:-0.37px;">ラーフ</div><div class="a g" style="left:1315px;top:67.5px;font-size:14px;line-height:20px;white-space:nowrap;letter-spacing:-0.21px;">20260516</div><div class="a g" style="left:auto;right:653px;top:87.5px;font-size:15px;line-height:20px;white-space:nowrap;letter-spacing:0.5px;margin-right:-0.5px;">32</div><div class="a g" style="left:1187.94px;top:87.5px;font-size:14px;line-height:20px;white-space:nowrap;letter-spacing:-0.25px;">ケートゥ</div><div class="a g" style="left:1250.94px;top:87.5px;font-size:14px;line-height:20px;white-space:nowrap;letter-spacing:-0.74px;">木星</div><div class="a g" style="left:1315px;top:87.5px;font-size:14px;line-height:20px;white-space:nowrap;letter-spacing:-0.21px;">20270603</div><div class="a g" style="left:auto;right:653px;top:107.5px;font-size:15px;line-height:20px;white-space:nowrap;letter-spacing:0.5px;margin-right:-0.5px;">33</div><div class="a g" style="left:1187.94px;top:107.5px;font-size:14px;line-height:20px;white-space:nowrap;letter-spacing:-0.25px;">ケートゥ</div><div class="a g" style="left:1250.94px;top:107.5px;font-size:14px;line-height:20px;white-space:nowrap;letter-spacing:-0.74px;">土星</div><div class="a g" style="left:1315px;top:107.5px;font-size:14px;line-height:20px;white-space:nowrap;letter-spacing:-0.21px;">20280509</div><div class="a g" style="left:auto;right:653px;top:127.5px;font-size:15px;line-height:20px;white-space:nowrap;letter-spacing:0.5px;margin-right:-0.5px;">34</div><div class="a g" style="left:1187.94px;top:127.5px;font-size:14px;line-height:20px;white-space:nowrap;letter-spacing:-0.25px;">ケートゥ</div><div class="a g" style="left:1250.94px;top:127.5px;font-size:14px;line-height:20px;white-space:nowrap;letter-spacing:-0.74px;">水星</div><div class="a g" style="left:1315px;top:127.5px;font-size:14px;line-height:20px;white-space:nowrap;letter-spacing:-0.21px;">20290617</div><div class="a g" style="left:auto;right:653px;top:147.5px;font-size:15px;line-height:20px;white-space:nowrap;letter-spacing:0.5px;margin-right:-0.5px;">35</div><div class="a g" style="left:auto;right:653px;top:167.5px;font-size:15px;line-height:20px;white-space:nowrap;letter-spacing:0.5px;margin-right:-0.5px;">36</div><div class="a g" style="left:1187.94px;top:167.5px;font-size:14px;line-height:20px;white-space:nowrap;letter-spacing:-0.74px;">金星</div><div class="a g" style="left:1250.94px;top:167.5px;font-size:14px;line-height:20px;white-space:nowrap;letter-spacing:-0.74px;">金星</div><div class="a g" style="left:1315px;top:167.5px;font-size:14px;line-height:20px;white-space:nowrap;letter-spacing:-0.21px;">20300616</div><div class="a g" style="left:auto;right:653px;top:187.5px;font-size:15px;line-height:20px;white-space:nowrap;letter-spacing:0.5px;margin-right:-0.5px;">37</div><div class="a g" style="left:1187.94px;top:187.5px;font-size:14px;line-height:20px;white-space:nowrap;letter-spacing:-0.74px;">金星</div><div class="a g" style="left:1250.94px;top:187.5px;font-size:14px;line-height:20px;white-space:nowrap;letter-spacing:-0.74px;">太陽</div><div class="a g" style="left:1315px;top:187.5px;font-size:14px;line-height:20px;white-space:nowrap;letter-spacing:-0.21px;">20331015</div><div class="a g" style="left:auto;right:653px;top:207.5px;font-size:15px;line-height:20px;white-space:nowrap;letter-spacing:0.5px;margin-right:-0.5px;">38</div><div class="a g" style="left:1187.94px;top:207.5px;font-size:14px;line-height:20px;white-space:nowrap;letter-spacing:-0.74px;">金星</div><div class="a g" style="left:1251.5px;top:207.5px;font-size:14px;line-height:20px;white-space:nowrap;">月</div><div class="a g" style="left:1315px;top:207.5px;font-size:14px;line-height:20px;white-space:nowrap;letter-spacing:-0.21px;">20341015</div><div class="a g" style="left:auto;right:653px;top:227.5px;font-size:15px;line-height:20px;white-space:nowrap;letter-spacing:0.5px;margin-right:-0.5px;">39</div><div class="a g" style="left:1187.94px;top:227.5px;font-size:14px;line-height:20px;white-space:nowrap;letter-spacing:-0.74px;">金星</div><div class="a g" style="left:1250.94px;top:227.5px;font-size:14px;line-height:20px;white-space:nowrap;letter-spacing:-0.74px;">火星</div><div class="a g" style="left:1315px;top:227.5px;font-size:14px;line-height:20px;white-space:nowrap;letter-spacing:-0.21px;">20360614</div><div class="a g" style="left:auto;right:653px;top:247.5px;font-size:15px;line-height:20px;white-space:nowrap;letter-spacing:0.5px;margin-right:-0.5px;">40</div><div class="a g" style="left:1187.94px;top:247.5px;font-size:14px;line-height:20px;white-space:nowrap;letter-spacing:-0.74px;">金星</div><div class="a g" style="left:1250.94px;top:247.5px;font-size:14px;line-height:20px;white-space:nowrap;letter-spacing:-0.37px;">ラーフ</div><div class="a g" style="left:1315px;top:247.5px;font-size:14px;line-height:20px;white-space:nowrap;letter-spacing:-0.21px;">20370814</div><div class="a g" style="left:auto;right:653px;top:267.5px;font-size:15px;line-height:20px;white-space:nowrap;letter-spacing:0.5px;margin-right:-0.5px;">41</div><div class="a g" style="left:1187.94px;top:267.5px;font-size:14px;line-height:20px;white-space:nowrap;letter-spacing:-0.74px;">金星</div><div class="a g" style="left:1250.94px;top:267.5px;font-size:14px;line-height:20px;white-space:nowrap;letter-spacing:-0.74px;">木星</div><div class="a g" style="left:1315px;top:267.5px;font-size:14px;line-height:20px;white-space:nowrap;letter-spacing:-0.21px;">20400813</div><div class="a g" style="left:auto;right:653px;top:287.5px;font-size:15px;line-height:20px;white-space:nowrap;letter-spacing:0.5px;margin-right:-0.5px;">42</div><div class="a g" style="left:1187.94px;top:287.5px;font-size:14px;line-height:20px;white-space:nowrap;letter-spacing:-0.74px;">金星</div><div class="a g" style="left:1250.94px;top:287.5px;font-size:14px;line-height:20px;white-space:nowrap;letter-spacing:-0.74px;">土星</div><div class="a g" style="left:1315px;top:287.5px;font-size:14px;line-height:20px;white-space:nowrap;letter-spacing:-0.21px;">20430413</div><div class="a g" style="left:auto;right:653px;top:307.5px;font-size:15px;line-height:20px;white-space:nowrap;letter-spacing:0.5px;margin-right:-0.5px;">43</div><div class="a g" style="left:1187.94px;top:307.5px;font-size:14px;line-height:20px;white-space:nowrap;letter-spacing:-0.74px;">金星</div><div class="a g" style="left:1250.94px;top:307.5px;font-size:14px;line-height:20px;white-space:nowrap;letter-spacing:-0.74px;">水星</div><div class="a g" style="left:1315px;top:307.5px;font-size:14px;line-height:20px;white-space:nowrap;letter-spacing:-0.21px;">20460612</div><div class="a g" style="left:auto;right:653px;top:327.5px;font-size:15px;line-height:20px;white-space:nowrap;letter-spacing:0.5px;margin-right:-0.5px;">44</div><div class="a g" style="left:1187.94px;top:327.5px;font-size:14px;line-height:20px;white-space:nowrap;letter-spacing:-0.74px;">金星</div><div class="a g" style="left:1250.94px;top:327.5px;font-size:14px;line-height:20px;white-space:nowrap;letter-spacing:-0.25px;">ケートゥ</div><div class="a g" style="left:1315px;top:327.5px;font-size:14px;line-height:20px;white-space:nowrap;letter-spacing:-0.21px;">20490411</div><div class="a g" style="left:auto;right:653px;top:347.5px;font-size:15px;line-height:20px;white-space:nowrap;letter-spacing:0.5px;margin-right:-0.5px;">45</div><div class="a g" style="left:auto;right:653px;top:367.5px;font-size:15px;line-height:20px;white-space:nowrap;letter-spacing:0.5px;margin-right:-0.5px;">46</div><div class="a g" style="left:1187.94px;top:367.5px;font-size:14px;line-height:20px;white-space:nowrap;letter-spacing:-0.74px;">太陽</div><div class="a g" style="left:1250.94px;top:367.5px;font-size:14px;line-height:20px;white-space:nowrap;letter-spacing:-0.74px;">太陽</div><div class="a g" style="left:1315px;top:367.5px;font-size:14px;line-height:20px;white-space:nowrap;letter-spacing:-0.21px;">20500616</div><div class="a g" style="left:auto;right:653px;top:387.5px;font-size:15px;line-height:20px;white-space:nowrap;letter-spacing:0.5px;margin-right:-0.5px;">47</div><div class="a g" style="left:1187.94px;top:387.5px;font-size:14px;line-height:20px;white-space:nowrap;letter-spacing:-0.74px;">太陽</div><div class="a g" style="left:1251.5px;top:387.5px;font-size:14px;line-height:20px;white-space:nowrap;">月</div><div class="a g" style="left:1315px;top:387.5px;font-size:14px;line-height:20px;white-space:nowrap;letter-spacing:-0.21px;">20501004</div><div class="a g" style="left:auto;right:653px;top:407.5px;font-size:15px;line-height:20px;white-space:nowrap;letter-spacing:0.5px;margin-right:-0.5px;">48</div><div class="a g" style="left:1187.94px;top:407.5px;font-size:14px;line-height:20px;white-space:nowrap;letter-spacing:-0.74px;">太陽</div><div class="a g" style="left:1250.94px;top:407.5px;font-size:14px;line-height:20px;white-space:nowrap;letter-spacing:-0.74px;">火星</div><div class="a g" style="left:1315px;top:407.5px;font-size:14px;line-height:20px;white-space:nowrap;letter-spacing:-0.21px;">20510404</div><div class="a g" style="left:auto;right:653px;top:427.5px;font-size:15px;line-height:20px;white-space:nowrap;letter-spacing:0.5px;margin-right:-0.5px;">49</div><div class="a g" style="left:1187.94px;top:427.5px;font-size:14px;line-height:20px;white-space:nowrap;letter-spacing:-0.74px;">太陽</div><div class="a g" style="left:1250.94px;top:427.5px;font-size:14px;line-height:20px;white-space:nowrap;letter-spacing:-0.37px;">ラーフ</div><div class="a g" style="left:1315px;top:427.5px;font-size:14px;line-height:20px;white-space:nowrap;letter-spacing:-0.21px;">20510810</div><div class="a g" style="left:auto;right:653px;top:447.5px;font-size:15px;line-height:20px;white-space:nowrap;letter-spacing:0.5px;margin-right:-0.5px;">50</div><div class="a g" style="left:1187.94px;top:447.5px;font-size:14px;line-height:20px;white-space:nowrap;letter-spacing:-0.74px;">太陽</div><div class="a g" style="left:1250.94px;top:447.5px;font-size:14px;line-height:20px;white-space:nowrap;letter-spacing:-0.74px;">木星</div><div class="a g" style="left:1315px;top:447.5px;font-size:14px;line-height:20px;white-space:nowrap;letter-spacing:-0.21px;">20520703</div><div class="a g" style="left:auto;right:653px;top:467.5px;font-size:15px;line-height:20px;white-space:nowrap;letter-spacing:0.5px;margin-right:-0.5px;">51</div><div class="a g" style="left:1187.94px;top:467.5px;font-size:14px;line-height:20px;white-space:nowrap;letter-spacing:-0.74px;">太陽</div><div class="a g" style="left:1250.94px;top:467.5px;font-size:14px;line-height:20px;white-space:nowrap;letter-spacing:-0.74px;">土星</div><div class="a g" style="left:1315px;top:467.5px;font-size:14px;line-height:20px;white-space:nowrap;letter-spacing:-0.21px;">20530421</div><div class="a g" style="left:auto;right:653px;top:487.5px;font-size:15px;line-height:20px;white-space:nowrap;letter-spacing:0.5px;margin-right:-0.5px;">52</div><div class="a g" style="left:1187.94px;top:487.5px;font-size:14px;line-height:20px;white-space:nowrap;letter-spacing:-0.74px;">太陽</div><div class="a g" style="left:1250.94px;top:487.5px;font-size:14px;line-height:20px;white-space:nowrap;letter-spacing:-0.74px;">水星</div><div class="a g" style="left:1315px;top:487.5px;font-size:14px;line-height:20px;white-space:nowrap;letter-spacing:-0.21px;">20540403</div><div class="a g" style="left:auto;right:653px;top:507.5px;font-size:15px;line-height:20px;white-space:nowrap;letter-spacing:0.5px;margin-right:-0.5px;">53</div><div class="a g" style="left:1187.94px;top:507.5px;font-size:14px;line-height:20px;white-space:nowrap;letter-spacing:-0.74px;">太陽</div><div class="a g" style="left:1250.94px;top:507.5px;font-size:14px;line-height:20px;white-space:nowrap;letter-spacing:-0.25px;">ケートゥ</div><div class="a g" style="left:1315px;top:507.5px;font-size:14px;line-height:20px;white-space:nowrap;letter-spacing:-0.21px;">20550207</div><div class="a g" style="left:auto;right:653px;top:527.5px;font-size:15px;line-height:20px;white-space:nowrap;letter-spacing:0.5px;margin-right:-0.5px;">54</div><div class="a g" style="left:1187.94px;top:527.5px;font-size:14px;line-height:20px;white-space:nowrap;letter-spacing:-0.74px;">太陽</div><div class="a g" style="left:1250.94px;top:527.5px;font-size:14px;line-height:20px;white-space:nowrap;letter-spacing:-0.74px;">金星</div><div class="a g" style="left:1315px;top:527.5px;font-size:14px;line-height:20px;white-space:nowrap;letter-spacing:-0.21px;">20550615</div><div class="a g" style="left:auto;right:653px;top:547.5px;font-size:15px;line-height:20px;white-space:nowrap;letter-spacing:0.5px;margin-right:-0.5px;">55</div><div class="a g" style="left:auto;right:653px;top:567.5px;font-size:15px;line-height:20px;white-space:nowrap;letter-spacing:0.5px;margin-right:-0.5px;">56</div><div class="a g" style="left:1188.5px;top:567.5px;font-size:14px;line-height:20px;white-space:nowrap;">月</div><div class="a g" style="left:1251.5px;top:567.5px;font-size:14px;line-height:20px;white-space:nowrap;">月</div><div class="a g" style="left:1315px;top:567.5px;font-size:14px;line-height:20px;white-space:nowrap;letter-spacing:-0.21px;">20560616</div><div class="a g" style="left:auto;right:653px;top:587.5px;font-size:15px;line-height:20px;white-space:nowrap;letter-spacing:0.5px;margin-right:-0.5px;">57</div><div class="a g" style="left:1188.5px;top:587.5px;font-size:14px;line-height:20px;white-space:nowrap;">月</div><div class="a g" style="left:1250.94px;top:587.5px;font-size:14px;line-height:20px;white-space:nowrap;letter-spacing:-0.74px;">火星</div><div class="a g" style="left:1315px;top:587.5px;font-size:14px;line-height:20px;white-space:nowrap;letter-spacing:-0.21px;">20570416</div><div class="a g" style="left:auto;right:653px;top:607.5px;font-size:15px;line-height:20px;white-space:nowrap;letter-spacing:0.5px;margin-right:-0.5px;">58</div><div class="a g" style="left:1188.5px;top:607.5px;font-size:14px;line-height:20px;white-space:nowrap;">月</div><div class="a g" style="left:1250.94px;top:607.5px;font-size:14px;line-height:20px;white-space:nowrap;letter-spacing:-0.37px;">ラーフ</div><div class="a g" style="left:1315px;top:607.5px;font-size:14px;line-height:20px;white-space:nowrap;letter-spacing:-0.21px;">20571115</div><div class="a g" style="left:auto;right:653px;top:627.5px;font-size:15px;line-height:20px;white-space:nowrap;letter-spacing:0.5px;margin-right:-0.5px;">59</div><div class="a g" style="left:1188.5px;top:627.5px;font-size:14px;line-height:20px;white-space:nowrap;">月</div><div class="a g" style="left:1250.94px;top:627.5px;font-size:14px;line-height:20px;white-space:nowrap;letter-spacing:-0.74px;">木星</div><div class="a g" style="left:1315px;top:627.5px;font-size:14px;line-height:20px;white-space:nowrap;letter-spacing:-0.21px;">20590517</div><div class="a g" style="left:auto;right:653px;top:647.5px;font-size:15px;line-height:20px;white-space:nowrap;letter-spacing:0.5px;margin-right:-0.5px;">60</div><div class="a g" style="left:1188.5px;top:647.5px;font-size:14px;line-height:20px;white-space:nowrap;">月</div><div class="a g" style="left:1250.94px;top:647.5px;font-size:14px;line-height:20px;white-space:nowrap;letter-spacing:-0.74px;">土星</div><div class="a g" style="left:1315px;top:647.5px;font-size:14px;line-height:20px;white-space:nowrap;letter-spacing:-0.21px;">20600914</div><div class="b" style="left:1187px;top:67px;width:190px;height:601px;"></div><div class="hl" style="left:1187px;top:87px;width:190px;"></div><div class="hl" style="left:1187px;top:107px;width:190px;"></div><div class="hl" style="left:1187px;top:127px;width:190px;"></div><div class="hl" style="left:1187px;top:147px;width:190px;"></div><div class="hl" style="left:1187px;top:167px;width:190px;"></div><div class="hl" style="left:1187px;top:187px;width:190px;"></div><div class="hl" style="left:1187px;top:207px;width:190px;"></div><div class="hl" style="left:1187px;top:227px;width:190px;"></div><div class="hl" style="left:1187px;top:247px;width:190px;"></div><div class="hl" style="left:1187px;top:267px;width:190px;"></div><div class="hl" style="left:1187px;top:287px;width:190px;"></div><div class="hl" style="left:1187px;top:307px;width:190px;"></div><div class="hl" style="left:1187px;top:327px;width:190px;"></div><div class="hl" style="left:1187px;top:347px;width:190px;"></div><div class="hl" style="left:1187px;top:367px;width:190px;"></div><div class="hl" style="left:1187px;top:387px;width:190px;"></div><div class="hl" style="left:1187px;top:407px;width:190px;"></div><div class="hl" style="left:1187px;top:427px;width:190px;"></div><div class="hl" style="left:1187px;top:447px;width:190px;"></div><div class="hl" style="left:1187px;top:467px;width:190px;"></div><div class="hl" style="left:1187px;top:487px;width:190px;"></div><div class="hl" style="left:1187px;top:507px;width:190px;"></div><div class="hl" style="left:1187px;top:527px;width:190px;"></div><div class="hl" style="left:1187px;top:547px;width:190px;"></div><div class="hl" style="left:1187px;top:567px;width:190px;"></div><div class="hl" style="left:1187px;top:587px;width:190px;"></div><div class="hl" style="left:1187px;top:607px;width:190px;"></div><div class="hl" style="left:1187px;top:627px;width:190px;"></div><div class="hl" style="left:1187px;top:647px;width:190px;"></div><div class="vl" style="left:1250px;top:67px;height:601px;"></div><div class="vl" style="left:1313px;top:67px;height:601px;"></div><div class="a g" style="left:auto;right:422px;top:67.5px;font-size:15px;line-height:20px;white-space:nowrap;letter-spacing:0.5px;margin-right:-0.5px;">61</div><div class="a g" style="left:1419.5px;top:67.5px;font-size:14px;line-height:20px;white-space:nowrap;">月</div><div class="a g" style="left:1481.94px;top:67.5px;font-size:14px;line-height:20px;white-space:nowrap;letter-spacing:-0.74px;">水星</div><div class="a g" style="left:1546px;top:67.5px;font-size:14px;line-height:20px;white-space:nowrap;letter-spacing:-0.21px;">20620415</div><div class="a g" style="left:auto;right:422px;top:87.5px;font-size:15px;line-height:20px;white-space:nowrap;letter-spacing:0.5px;margin-right:-0.5px;">62</div><div class="a g" style="left:1419.5px;top:87.5px;font-size:14px;line-height:20px;white-space:nowrap;">月</div><div class="a g" style="left:1481.94px;top:87.5px;font-size:14px;line-height:20px;white-space:nowrap;letter-spacing:-0.25px;">ケートゥ</div><div class="a g" style="left:1546px;top:87.5px;font-size:14px;line-height:20px;white-space:nowrap;letter-spacing:-0.21px;">20630914</div><div class="a g" style="left:auto;right:422px;top:107.5px;font-size:15px;line-height:20px;white-space:nowrap;letter-spacing:0.5px;margin-right:-0.5px;">63</div><div class="a g" style="left:1419.5px;top:107.5px;font-size:14px;line-height:20px;white-space:nowrap;">月</div><div class="a g" style="left:1481.94px;top:107.5px;font-size:14px;line-height:20px;white-space:nowrap;letter-spacing:-0.74px;">金星</div><div class="a g" style="left:1546px;top:107.5px;font-size:14px;line-height:20px;white-space:nowrap;letter-spacing:-0.21px;">20640414</div><div class="a g" style="left:auto;right:422px;top:127.5px;font-size:15px;line-height:20px;white-space:nowrap;letter-spacing:0.5px;margin-right:-0.5px;">64</div><div class="a g" style="left:1419.5px;top:127.5px;font-size:14px;line-height:20px;white-space:nowrap;">月</div><div class="a g" style="left:1481.94px;top:127.5px;font-size:14px;line-height:20px;white-space:nowrap;letter-spacing:-0.74px;">太陽</div><div class="a g" style="left:1546px;top:127.5px;font-size:14px;line-height:20px;white-space:nowrap;letter-spacing:-0.21px;">20651214</div><div class="a g" style="left:auto;right:422px;top:147.5px;font-size:15px;line-height:20px;white-space:nowrap;letter-spacing:0.5px;margin-right:-0.5px;">65</div><div class="a g" style="left:auto;right:422px;top:167.5px;font-size:15px;line-height:20px;white-space:nowrap;letter-spacing:0.5px;margin-right:-0.5px;">66</div><div class="a g" style="left:1418.94px;top:167.5px;font-size:14px;line-height:20px;white-space:nowrap;letter-spacing:-0.74px;">火星</div><div class="a g" style="left:1481.94px;top:167.5px;font-size:14px;line-height:20px;white-space:nowrap;letter-spacing:-0.74px;">火星</div><div class="a g" style="left:1546px;top:167.5px;font-size:14px;line-height:20px;white-space:nowrap;letter-spacing:-0.21px;">20660616</div><div class="a g" style="left:auto;right:422px;top:187.5px;font-size:15px;line-height:20px;white-space:nowrap;letter-spacing:0.5px;margin-right:-0.5px;">67</div><div class="a g" style="left:1418.94px;top:187.5px;font-size:14px;line-height:20px;white-space:nowrap;letter-spacing:-0.74px;">火星</div><div class="a g" style="left:1481.94px;top:187.5px;font-size:14px;line-height:20px;white-space:nowrap;letter-spacing:-0.37px;">ラーフ</div><div class="a g" style="left:1546px;top:187.5px;font-size:14px;line-height:20px;white-space:nowrap;letter-spacing:-0.21px;">20661112</div><div class="a g" style="left:auto;right:422px;top:207.5px;font-size:15px;line-height:20px;white-space:nowrap;letter-spacing:0.5px;margin-right:-0.5px;">68</div><div class="a g" style="left:1418.94px;top:207.5px;font-size:14px;line-height:20px;white-space:nowrap;letter-spacing:-0.74px;">火星</div><div class="a g" style="left:1481.94px;top:207.5px;font-size:14px;line-height:20px;white-space:nowrap;letter-spacing:-0.74px;">木星</div><div class="a g" style="left:1546px;top:207.5px;font-size:14px;line-height:20px;white-space:nowrap;letter-spacing:-0.21px;">20671130</div><div class="a g" style="left:auto;right:422px;top:227.5px;font-size:15px;line-height:20px;white-space:nowrap;letter-spacing:0.5px;margin-right:-0.5px;">69</div><div class="a g" style="left:1418.94px;top:227.5px;font-size:14px;line-height:20px;white-space:nowrap;letter-spacing:-0.74px;">火星</div><div class="a g" style="left:1481.94px;top:227.5px;font-size:14px;line-height:20px;white-space:nowrap;letter-spacing:-0.74px;">土星</div><div class="a g" style="left:1546px;top:227.5px;font-size:14px;line-height:20px;white-space:nowrap;letter-spacing:-0.21px;">20681105</div><div class="a g" style="left:auto;right:422px;top:247.5px;font-size:15px;line-height:20px;white-space:nowrap;letter-spacing:0.5px;margin-right:-0.5px;">70</div><div class="a g" style="left:1418.94px;top:247.5px;font-size:14px;line-height:20px;white-space:nowrap;letter-spacing:-0.74px;">火星</div><div class="a g" style="left:1481.94px;top:247.5px;font-size:14px;line-height:20px;white-space:nowrap;letter-spacing:-0.74px;">水星</div><div class="a g" style="left:1546px;top:247.5px;font-size:14px;line-height:20px;white-space:nowrap;letter-spacing:-0.21px;">20691215</div><div class="a g" style="left:auto;right:422px;top:267.5px;font-size:15px;line-height:20px;white-space:nowrap;letter-spacing:0.5px;margin-right:-0.5px;">71</div><div class="a g" style="left:1418.94px;top:267.5px;font-size:14px;line-height:20px;white-space:nowrap;letter-spacing:-0.74px;">火星</div><div class="a g" style="left:1481.94px;top:267.5px;font-size:14px;line-height:20px;white-space:nowrap;letter-spacing:-0.25px;">ケートゥ</div><div class="a g" style="left:1546px;top:267.5px;font-size:14px;line-height:20px;white-space:nowrap;letter-spacing:-0.21px;">20701212</div><div class="a g" style="left:auto;right:422px;top:287.5px;font-size:15px;line-height:20px;white-space:nowrap;letter-spacing:0.5px;margin-right:-0.5px;">72</div><div class="a g" style="left:1418.94px;top:287.5px;font-size:14px;line-height:20px;white-space:nowrap;letter-spacing:-0.74px;">火星</div><div class="a g" style="left:1481.94px;top:287.5px;font-size:14px;line-height:20px;white-space:nowrap;letter-spacing:-0.74px;">金星</div><div class="a g" style="left:1546px;top:287.5px;font-size:14px;line-height:20px;white-space:nowrap;letter-spacing:-0.21px;">20710510</div><div class="a g" style="left:auto;right:422px;top:307.5px;font-size:15px;line-height:20px;white-space:nowrap;letter-spacing:0.5px;margin-right:-0.5px;">73</div><div class="a g" style="left:1418.94px;top:307.5px;font-size:14px;line-height:20px;white-space:nowrap;letter-spacing:-0.74px;">火星</div><div class="a g" style="left:1481.94px;top:307.5px;font-size:14px;line-height:20px;white-space:nowrap;letter-spacing:-0.74px;">太陽</div><div class="a g" style="left:1546px;top:307.5px;font-size:14px;line-height:20px;white-space:nowrap;letter-spacing:-0.21px;">20720708</div><div class="a g" style="left:auto;right:422px;top:327.5px;font-size:15px;line-height:20px;white-space:nowrap;letter-spacing:0.5px;margin-right:-0.5px;">74</div><div class="a g" style="left:1418.94px;top:327.5px;font-size:14px;line-height:20px;white-space:nowrap;letter-spacing:-0.74px;">火星</div><div class="a g" style="left:1482.5px;top:327.5px;font-size:14px;line-height:20px;white-space:nowrap;">月</div><div class="a g" style="left:1546px;top:327.5px;font-size:14px;line-height:20px;white-space:nowrap;letter-spacing:-0.21px;">20721113</div><div class="a g" style="left:auto;right:422px;top:347.5px;font-size:15px;line-height:20px;white-space:nowrap;letter-spacing:0.5px;margin-right:-0.5px;">75</div><div class="a g" style="left:auto;right:422px;top:367.5px;font-size:15px;line-height:20px;white-space:nowrap;letter-spacing:0.5px;margin-right:-0.5px;">76</div><div class="a g" style="left:1418.94px;top:367.5px;font-size:14px;line-height:20px;white-space:nowrap;letter-spacing:-0.37px;">ラーフ</div><div class="a g" style="left:1481.94px;top:367.5px;font-size:14px;line-height:20px;white-space:nowrap;letter-spacing:-0.37px;">ラーフ</div><div class="a g" style="left:1546px;top:367.5px;font-size:14px;line-height:20px;white-space:nowrap;letter-spacing:-0.21px;">20730616</div><div class="a g" style="left:auto;right:422px;top:387.5px;font-size:15px;line-height:20px;white-space:nowrap;letter-spacing:0.5px;margin-right:-0.5px;">77</div><div class="a g" style="left:1418.94px;top:387.5px;font-size:14px;line-height:20px;white-space:nowrap;letter-spacing:-0.37px;">ラーフ</div><div class="a g" style="left:1481.94px;top:387.5px;font-size:14px;line-height:20px;white-space:nowrap;letter-spacing:-0.74px;">木星</div><div class="a g" style="left:1546px;top:387.5px;font-size:14px;line-height:20px;white-space:nowrap;letter-spacing:-0.21px;">20760227</div><div class="a g" style="left:auto;right:422px;top:407.5px;font-size:15px;line-height:20px;white-space:nowrap;letter-spacing:0.5px;margin-right:-0.5px;">78</div><div class="a g" style="left:1418.94px;top:407.5px;font-size:14px;line-height:20px;white-space:nowrap;letter-spacing:-0.37px;">ラーフ</div><div class="a g" style="left:1481.94px;top:407.5px;font-size:14px;line-height:20px;white-space:nowrap;letter-spacing:-0.74px;">土星</div><div class="a g" style="left:1546px;top:407.5px;font-size:14px;line-height:20px;white-space:nowrap;letter-spacing:-0.21px;">20780722</div><div class="a g" style="left:auto;right:422px;top:427.5px;font-size:15px;line-height:20px;white-space:nowrap;letter-spacing:0.5px;margin-right:-0.5px;">79</div><div class="a g" style="left:1418.94px;top:427.5px;font-size:14px;line-height:20px;white-space:nowrap;letter-spacing:-0.37px;">ラーフ</div><div class="a g" style="left:1481.94px;top:427.5px;font-size:14px;line-height:20px;white-space:nowrap;letter-spacing:-0.74px;">水星</div><div class="a g" style="left:1546px;top:427.5px;font-size:14px;line-height:20px;white-space:nowrap;letter-spacing:-0.21px;">20810527</div><div class="a g" style="left:auto;right:422px;top:447.5px;font-size:15px;line-height:20px;white-space:nowrap;letter-spacing:0.5px;margin-right:-0.5px;">80</div><div class="a g" style="left:1418.94px;top:447.5px;font-size:14px;line-height:20px;white-space:nowrap;letter-spacing:-0.37px;">ラーフ</div><div class="a g" style="left:1481.94px;top:447.5px;font-size:14px;line-height:20px;white-space:nowrap;letter-spacing:-0.25px;">ケートゥ</div><div class="a g" style="left:1546px;top:447.5px;font-size:14px;line-height:20px;white-space:nowrap;letter-spacing:-0.21px;">20831214</div><div class="a g" style="left:auto;right:422px;top:467.5px;font-size:15px;line-height:20px;white-space:nowrap;letter-spacing:0.5px;margin-right:-0.5px;">81</div><div class="a g" style="left:1418.94px;top:467.5px;font-size:14px;line-height:20px;white-space:nowrap;letter-spacing:-0.37px;">ラーフ</div><div class="a g" style="left:1481.94px;top:467.5px;font-size:14px;line-height:20px;white-space:nowrap;letter-spacing:-0.74px;">金星</div><div class="a g" style="left:1546px;top:467.5px;font-size:14px;line-height:20px;white-space:nowrap;letter-spacing:-0.21px;">20841231</div><div class="a g" style="left:auto;right:422px;top:487.5px;font-size:15px;line-height:20px;white-space:nowrap;letter-spacing:0.5px;margin-right:-0.5px;">82</div><div class="a g" style="left:1418.94px;top:487.5px;font-size:14px;line-height:20px;white-space:nowrap;letter-spacing:-0.37px;">ラーフ</div><div class="a g" style="left:1481.94px;top:487.5px;font-size:14px;line-height:20px;white-space:nowrap;letter-spacing:-0.74px;">太陽</div><div class="a g" style="left:1546px;top:487.5px;font-size:14px;line-height:20px;white-space:nowrap;letter-spacing:-0.21px;">20871231</div><div class="a g" style="left:auto;right:422px;top:507.5px;font-size:15px;line-height:20px;white-space:nowrap;letter-spacing:0.5px;margin-right:-0.5px;">83</div><div class="a g" style="left:1418.94px;top:507.5px;font-size:14px;line-height:20px;white-space:nowrap;letter-spacing:-0.37px;">ラーフ</div><div class="a g" style="left:1482.5px;top:507.5px;font-size:14px;line-height:20px;white-space:nowrap;">月</div><div class="a g" style="left:1546px;top:507.5px;font-size:14px;line-height:20px;white-space:nowrap;letter-spacing:-0.21px;">20881123</div><div class="a g" style="left:auto;right:422px;top:527.5px;font-size:15px;line-height:20px;white-space:nowrap;letter-spacing:0.5px;margin-right:-0.5px;">84</div><div class="a g" style="left:1418.94px;top:527.5px;font-size:14px;line-height:20px;white-space:nowrap;letter-spacing:-0.37px;">ラーフ</div><div class="a g" style="left:1481.94px;top:527.5px;font-size:14px;line-height:20px;white-space:nowrap;letter-spacing:-0.74px;">火星</div><div class="a g" style="left:1546px;top:527.5px;font-size:14px;line-height:20px;white-space:nowrap;letter-spacing:-0.21px;">20900525</div><div class="a g" style="left:auto;right:422px;top:547.5px;font-size:15px;line-height:20px;white-space:nowrap;letter-spacing:0.5px;margin-right:-0.5px;">85</div><div class="a g" style="left:auto;right:422px;top:567.5px;font-size:15px;line-height:20px;white-space:nowrap;letter-spacing:0.5px;margin-right:-0.5px;">86</div><div class="a g" style="left:auto;right:422px;top:587.5px;font-size:15px;line-height:20px;white-space:nowrap;letter-spacing:0.5px;margin-right:-0.5px;">87</div><div class="a g" style="left:auto;right:422px;top:607.5px;font-size:15px;line-height:20px;white-space:nowrap;letter-spacing:0.5px;margin-right:-0.5px;">88</div><div class="a g" style="left:auto;right:422px;top:627.5px;font-size:15px;line-height:20px;white-space:nowrap;letter-spacing:0.5px;margin-right:-0.5px;">89</div><div class="a g" style="left:auto;right:422px;top:647.5px;font-size:15px;line-height:20px;white-space:nowrap;letter-spacing:0.5px;margin-right:-0.5px;">90</div><div class="b" style="left:1418px;top:67px;width:190px;height:601px;"></div><div class="hl" style="left:1418px;top:87px;width:190px;"></div><div class="hl" style="left:1418px;top:107px;width:190px;"></div><div class="hl" style="left:1418px;top:127px;width:190px;"></div><div class="hl" style="left:1418px;top:147px;width:190px;"></div><div class="hl" style="left:1418px;top:167px;width:190px;"></div><div class="hl" style="left:1418px;top:187px;width:190px;"></div><div class="hl" style="left:1418px;top:207px;width:190px;"></div><div class="hl" style="left:1418px;top:227px;width:190px;"></div><div class="hl" style="left:1418px;top:247px;width:190px;"></div><div class="hl" style="left:1418px;top:267px;width:190px;"></div><div class="hl" style="left:1418px;top:287px;width:190px;"></div><div class="hl" style="left:1418px;top:307px;width:190px;"></div><div class="hl" style="left:1418px;top:327px;width:190px;"></div><div class="hl" style="left:1418px;top:347px;width:190px;"></div><div class="hl" style="left:1418px;top:367px;width:190px;"></div><div class="hl" style="left:1418px;top:387px;width:190px;"></div><div class="hl" style="left:1418px;top:407px;width:190px;"></div><div class="hl" style="left:1418px;top:427px;width:190px;"></div><div class="hl" style="left:1418px;top:447px;width:190px;"></div><div class="hl" style="left:1418px;top:467px;width:190px;"></div><div class="hl" style="left:1418px;top:487px;width:190px;"></div><div class="hl" style="left:1418px;top:507px;width:190px;"></div><div class="hl" style="left:1418px;top:527px;width:190px;"></div><div class="hl" style="left:1418px;top:547px;width:190px;"></div><div class="hl" style="left:1418px;top:567px;width:190px;"></div><div class="hl" style="left:1418px;top:587px;width:190px;"></div><div class="hl" style="left:1418px;top:607px;width:190px;"></div><div class="hl" style="left:1418px;top:627px;width:190px;"></div><div class="hl" style="left:1418px;top:647px;width:190px;"></div><div class="vl" style="left:1481px;top:67px;height:601px;"></div><div class="vl" style="left:1544px;top:67px;height:601px;"></div></div><div class="a" style="left:0px;top:117px;width:2px;height:860px;background:#f0f0f0"></div><div class="a" style="left:1px;top:149px;width:1px;height:828px;background:#868686"></div><div class="a" style="left:1840px;top:150px;width:17px;height:826px;background:#f0f0f0"></div><div class="a" style="left:1840px;top:150px;width:16px;height:4px;background:#000"></div><div class="a" style="left:1848px;top:170px;width:2px;height:375px;background:#8a8a8a"></div><div class="a" style="left:2px;top:960px;width:1838px;height:17px;background:#f0f0f0"></div><div class="a" style="left:288px;top:968px;width:756px;height:2px;background:#8a8a8a"></div><div class="a" style="left:1837px;top:960px;width:3px;height:17px;background:#000"></div><div class="a" style="left:4px;top:961px;width:15px;height:15px;background:#fdfdfd;border:1px solid #d0d0d0;border-radius:3px"></div><div class="a" style="left:20px;top:961px;width:15px;height:15px;background:#fdfdfd;border:1px solid #d0d0d0;border-radius:3px"></div><div class="a" style="left:37px;top:961px;width:15px;height:15px;background:#fdfdfd;border:1px solid #d0d0d0;border-radius:3px"></div><div class="a" style="left:54px;top:961px;width:15px;height:15px;background:#fdfdfd;border:1px solid #d0d0d0;border-radius:3px"></div><svg class="a" style="left:4px;top:961px;" width="66" height="15" viewBox="0 0 66 15"><g fill="#000"><rect x="3.500" y="4" width="1.500" height="7"/><path d="M10 4v7l-4.500-3.500z"/><path d="M26 4v7l-4.500-3.500z"/><path d="M39 4v7l4.500-3.500z"/><path d="M55 4v7l4.500-3.500z"/><rect x="60" y="4" width="1.500" height="7"/></g></svg><svg class="a" style="left:70px;top:960px;" width="204" height="17" viewBox="0 0 204 17"><path d="M3 0l4.500 16h31.500l6-16z" fill="#fff"/><g stroke="#222" stroke-width="1" fill="none"><path d="M3 .5l4.500 15.500h31.500l6-15.500"/></g><g stroke="#808080" stroke-width="1" fill="none"><path d="M45 .5h151M40.500 16h30.500l6-15.500M72.500 16h66l6-15.500M140 16h30.500l6-15.500M172 16h24"/></g><rect x="196" y="0" width="5" height="17" fill="#b0b0b0"/><path d="M196.500 0v17" stroke="#606060"/></svg><div class="a ui" style="left:79.5px;top:960px;font-size:12px;line-height:17px;white-space:nowrap;letter-spacing:-2.96px;">メイン</div><div class="a ui" style="left:115.5px;top:960px;font-size:12px;line-height:17px;white-space:nowrap;letter-spacing:-0.52px;">判断</div><div class="a ui" style="left:149.5px;top:960px;font-size:12px;line-height:17px;white-space:nowrap;letter-spacing:-1.8px;">各種チャート</div><div class="a ui" style="left:215.3px;top:960px;font-size:12px;line-height:17px;white-space:nowrap;letter-spacing:-1.02px;">設定</div><div class="a ui" style="left:248.7px;top:960px;font-size:12px;line-height:17px;white-space:nowrap;letter-spacing:-1.02px;width:17px;overflow:hidden;">入力</div><div class="a" style="left:0px;top:977px;width:1904px;height:23px;background:#f0f0f0"></div><div class="a ui" style="left:10.3px;top:983px;font-size:12px;line-height:16px;white-space:nowrap;letter-spacing:-3.34px">シート</div><div class="a ui" style="left:39.5px;top:983px;font-size:12px;line-height:16px;white-space:nowrap;letter-spacing:-0.21px">1 / 5</div><div class="a ui" style="left:524px;top:983px;font-size:12px;line-height:16px;white-space:nowrap;letter-spacing:-0.92px">PageStyle_メイン</div><div class="a ui" style="left:1135px;top:983px;font-size:12px;line-height:16px;white-space:nowrap;letter-spacing:-1.02px">標準</div><div class="a ui" style="left:1171px;top:983px;font-size:12px;line-height:16px">*</div><div class="a ui" style="left:1441px;top:983px;font-size:12px;line-height:16px;white-space:nowrap;letter-spacing:0.1px">合計=0</div><div class="a ui" style="left:1867px;top:983px;font-size:12px;line-height:16px;white-space:nowrap;letter-spacing:-1.01px">100 %</div><div class="a" style="left:518px;top:982px;width:1px;height:16px;background:#9a9a9a"></div><div class="a" style="left:1093px;top:982px;width:1px;height:16px;background:#9a9a9a"></div><div class="a" style="left:1130px;top:982px;width:1px;height:16px;background:#9a9a9a"></div><div class="a" style="left:1167px;top:982px;width:1px;height:16px;background:#9a9a9a"></div><div class="a" style="left:1183px;top:982px;width:1px;height:16px;background:#9a9a9a"></div><div class="a" style="left:1212px;top:982px;width:1px;height:16px;background:#9a9a9a"></div><div class="a" style="left:1711px;top:982px;width:1px;height:16px;background:#9a9a9a"></div><div class="a" style="left:1859px;top:982px;width:1px;height:16px;background:#9a9a9a"></div><div class="a" style="left:1733px;top:990px;width:107px;height:1px;background:#7a7a7a"></div><svg class="a" style="left:1716px;top:984px;" width="140" height="14" viewBox="0 0 140 14"><g fill="none" stroke="#444" stroke-width="1"><circle cx="6" cy="7" r="5"/><path d="M3.500 7h5"/><circle cx="134" cy="7" r="5"/><path d="M131.500 7h5M134 4.500v5"/></g><circle cx="68.500" cy="7" r="4.500" fill="#8fb0e6" stroke="#4a6fb0" stroke-width="1"/></svg><div class="a" style="left:1857px;top:116px;width:47px;height:861px;background:#f0f0f0"></div><div class="a" style="left:1858px;top:116px;width:1px;height:861px;background:#fdfdfd"></div><div class="a" style="left:1864px;top:116px;width:1px;height:861px;background:#8e8e8e"></div><div class="a" style="left:1902px;top:116px;width:1px;height:861px;background:#a8a8a8"></div><svg class="a" style="left:1856px;top:527px;" width="8" height="38" viewBox="0 0 8 38"><path d="M2 1l4 3.500-4 3.500M2 30l4 3.500-4 3.500" fill="none" stroke="#6a6a6a" stroke-width="1"/><path d="M4 11v17" stroke="#6a6a6a" stroke-width="1.500" stroke-dasharray="1.500 2"/></svg><svg class="a" style="left:1875px;top:126px;" width="18" height="18" viewBox="0 0 18 18"><path d="M1 2.500h15M1 6h15M1 9.500h15" stroke="#2a2d32" stroke-width="1.400"/><path d="M8 12.500h8l-4 4z" fill="#000"/></svg><div class="a" style="left:1873px;top:154px;width:23px;height:1px;background:#b4b4b4"></div><div class="a" style="left:1868px;top:158px;width:32px;height:32px;background:#f4f4f4;border:1px solid #b0b0b0;border-radius:4px"></div><svg class="a" style="left:1873px;top:162px;" width="22" height="24" viewBox="0 0 22 24"><g stroke="#fff" stroke-width=".6"><path d="M1 6l5-3 5 3-5 3z" fill="#6ab8f4"/><path d="M1 6v6l5 3V9z" fill="#2f86e0"/><path d="M6 9v6l5-3V6z" fill="#1d6ac4"/><path d="M11 6l5-3 5 3-5 3z" fill="#a6e05a"/><path d="M11 6v6l5 3V9z" fill="#6cc02a"/><path d="M16 9v6l5-3V6z" fill="#4aa018"/><path d="M6 14l5-3 5 3-5 3z" fill="#a6e05a"/><path d="M6 14v5l5 3v-5z" fill="#6cc02a"/><path d="M11 17v5l5-3v-5z" fill="#4aa018"/><path d="M6 1.500l5-1.500 5 1.500-5 3z" fill="#6ab8f4"/></g></svg><svg class="a" style="left:1872px;top:196px;" width="24" height="24" viewBox="0 0 24 24"><path d="M3 14l9-9 6 8-10 8z" fill="#2f7fd6"/><circle cx="12" cy="12" r="5" fill="#1a2a3a"/><path d="M8 5c2-3 5-2 6 0" stroke="#b86a1a" stroke-width="2.400" fill="none"/><path d="M14 13c3 0 4 3 2 5" stroke="#3aa02a" stroke-width="2.400" fill="none"/><path d="M19 2l.9 2 2 .3-1.500 1.500.4 2.100L19 7l-1.800.9.400-2.100L16 4.300l2.100-.3z" fill="#f2c81a"/><path d="M3 9l.7 1.500 1.600.2-1.200 1.100.3 1.600L3 12.600l-1.400.8.300-1.600L.7 10.700l1.600-.2z" fill="#e83a9a"/><path d="M21 11l.6 1.200 1.300.2-1 .9.300 1.300L21 14l-1.200.6.300-1.300-1-.9 1.300-.2z" fill="#e83a3a"/><circle cx="12.500" cy="3" r="1.700" fill="#b05ad8"/></svg><svg class="a" style="left:1872px;top:232px;" width="24" height="22" viewBox="0 0 24 22"><path d="M2 6l14-4 6 12-14 5z" fill="#f4f6fa" stroke="#8a9098" stroke-width="1"/><path d="M5 8l10-3 4 8-10 3.500z" fill="#8ccaf4"/><path d="M9 16l3-4.500 4 1.500 3-1-1.500-3z" fill="#5aa02a"/><path d="M7 10l3-2.500M7 10v3" stroke="#2f5f9e" stroke-width="1.300" fill="none"/></svg><svg class="a" style="left:1872px;top:266px;" width="24" height="24" viewBox="0 0 24 24"><circle cx="12" cy="12" r="10" fill="#fafafa" stroke="#f0a020" stroke-width="2.600"/><path d="M17 6l-3.500 8-3.500-3.500z" fill="#e03020"/><path d="M7 18l3.500-8 3.500 3.500z" fill="#2f7fd6"/><text x="12" y="6.500" font-family="Liberation Sans,sans-serif" font-size="5.500" font-weight="bold" fill="#2a2d32" text-anchor="middle">N</text></svg><svg class="a" style="left:1872px;top:301px;" width="24" height="24" viewBox="0 0 24 24"><path d="M8 1.500h10l5 5V21H8z" fill="#e4f0fc" stroke="#5a9ad8" stroke-width="1"/><path d="M18 1.500v5h5" fill="#c4dcf4" stroke="#5a9ad8" stroke-width=".8"/><text x="10" y="19" font-family="Liberation Serif,serif" font-size="19" font-style="italic" fill="#1d3a7a" text-anchor="middle" letter-spacing="-1">fx</text></svg></div>
<div id="task" class="a" style=""></div>
<div class="a" style="left:365px;top:1036px;width:40px;height:40px;background:#2e3238;border:1px solid #3a3e45;border-radius:4px"></div><svg class="a" style="left:18px;top:1042px" width="28" height="28" viewBox="0 0 28 28"><defs><linearGradient id="wg" x1="0" y1="0" x2="1" y2="1"><stop offset="0" stop-color="#86e2ff"/><stop offset="1" stop-color="#169af0"/></linearGradient></defs><g fill="url(#wg)"><rect x="2.800" y="3" width="11" height="11" rx=".8"/><rect x="14.800" y="3" width="11" height="11" rx=".8"/><rect x="2.800" y="15" width="11" height="11" rx=".8"/><rect x="14.800" y="15" width="11" height="11" rx=".8"/></g></svg><svg class="a" style="left:63px;top:1043px" width="28" height="28" viewBox="0 0 28 28"><circle cx="14" cy="14" r="12" fill="#e84335"/><path d="M14 14L3.600 8A12 12 0 0 0 9 24.900z" fill="#34a853"/><path d="M14 14l-5 10.900A12 12 0 0 0 26 14z" fill="#fbbc05"/><path d="M14 14h12A12 12 0 0 0 3.600 8z" fill="#ea4335"/><circle cx="14" cy="14" r="5.500" fill="#fff"/><circle cx="14" cy="14" r="4.300" fill="#4285f4"/></svg><div class="a ui" style="left:78px;top:1039px;width:16px;height:16px;border-radius:8px;background:#5a3a32;color:#fff;font-size:10px;line-height:14px;text-align:center">y</div><svg class="a" style="left:107px;top:1042px" width="28" height="28" viewBox="0 0 28 28"><rect x="2" y="5" width="24" height="17" rx="1.500" fill="#2f9ae8" stroke="#8ad0fa" stroke-width="1.500"/><circle cx="10" cy="12" r="4" fill="#f4f8fc"/><path d="M10 12V8a4 4 0 0 1 4 4z" fill="#f0a020"/><path d="M17 9h6M17 12h6M17 15h6M5 19h18" stroke="#e4f4fc" stroke-width="1.500"/></svg><svg class="a" style="left:151px;top:1042px" width="28" height="28" viewBox="0 0 28 28"><circle cx="14" cy="14" r="8" fill="none" stroke="#8a9098" stroke-width="6" stroke-dasharray="4.200 2.100"/><circle cx="14" cy="14" r="8.500" fill="#9aa0a8"/><circle cx="14" cy="14" r="5.500" fill="#1f6fd0"/><circle cx="14" cy="14" r="3" fill="#e8f0fa"/></svg><svg class="a" style="left:194px;top:1042px" width="28" height="28" viewBox="0 0 28 28"><path d="M4 5l15-2v22l-15-2z" fill="#6aa6d8"/><rect x="9" y="5" width="15" height="18" fill="#a6c8e8" stroke="#dfeaf6" stroke-width="1"/><circle cx="16" cy="14" r="6" fill="#f07818"/><path d="M14 10.500v7l5.500-3.500z" fill="#fff"/></svg><svg class="a" style="left:238px;top:1042px" width="28" height="28" viewBox="0 0 28 28"><path d="M2 6a1.500 1.500 0 0 1 1.500-1.500h7l2.500 3h11.500A1.500 1.500 0 0 1 26 9v13a1.500 1.500 0 0 1-1.500 1.500h-21A1.500 1.500 0 0 1 2 22z" fill="#f2b01a"/><path d="M2 10.500h24V22a1.500 1.500 0 0 1-1.500 1.500h-21A1.500 1.500 0 0 1 2 22z" fill="#fbd34a"/><rect x="8" y="17" width="12" height="6.500" rx="1" fill="#1f86e0"/></svg><svg class="a" style="left:283px;top:1042px" width="28" height="28" viewBox="0 0 28 28"><path d="M14 3C7 3 2 8 2 14s4 10 8 10c3 0 2-3 4-4s6 1 9-2 3-15-9-15z" fill="#3a9ae0"/><circle cx="8" cy="11" r="2" fill="#e83a3a"/><circle cx="13" cy="7.500" r="2" fill="#f2c81a"/><circle cx="19" cy="9" r="2" fill="#4ac02a"/><circle cx="7.500" cy="17" r="2" fill="#f4f4f4"/><path d="M20 12l2 12h-3z" fill="#c88a3a"/><rect x="19" y="9" width="3" height="5" fill="#e8e0d0"/></svg><svg class="a" style="left:327px;top:1042px" width="28" height="28" viewBox="0 0 28 28"><rect x="5.500" y="2.500" width="17" height="23" rx="1.500" fill="#6a7684"/><rect x="7.500" y="4.500" width="13" height="4.500" fill="#4ad0f8"/><g fill="#dfe4ea"><rect x="7.500" y="11" width="3.500" height="3.500"/><rect x="12.300" y="11" width="3.500" height="3.500"/><rect x="17" y="11" width="3.500" height="3.500"/><rect x="7.500" y="15.700" width="3.500" height="3.500"/><rect x="12.300" y="15.700" width="3.500" height="3.500"/><rect x="7.500" y="20.400" width="3.500" height="3.500"/><rect x="12.300" y="20.400" width="3.500" height="3.500"/></g><rect x="17" y="15.700" width="3.500" height="8.200" fill="#0f5aa8"/></svg><svg class="a" style="left:371px;top:1041px" width="28" height="28" viewBox="0 0 28 28"><defs><linearGradient id="oog" x1="0" y1="0" x2="0" y2="1"><stop offset="0" stop-color="#1c96dc"/><stop offset="1" stop-color="#0a78c2"/></linearGradient></defs><circle cx="14" cy="14" r="11.800" fill="url(#oog)"/><path d="M13.500 9.300c1.300-1.300 2.800-1.600 4.200-.7 1.200-1.600 3-2.100 5.300-1.600-2 .4-3.300 1.400-4 3-.9.600-1.800.400-2.400-.2-.8-.9-1.800-1-3.100-.5z" fill="#fff"/><path d="M2.500 16.800c2.700-2.400 5.600-2.800 8.600-.9 2.400-3.400 6.300-4.400 11.500-3.200-4.400.8-7.200 2.900-8.600 6.300-1.900 1.200-3.700.8-5-.4-1.700-1.900-3.800-2.400-6.500-1.800z" fill="#fff"/></svg><div class="a" style="left:377px;top:1072px;width:16px;height:3px;border-radius:2px;background:#4cc2ff"></div><svg class="a" style="left:415px;top:1042px" width="28" height="28" viewBox="0 0 28 28"><rect x="5" y="3" width="18" height="22" rx="1.500" fill="#3ab4f0"/><rect x="5" y="22" width="18" height="3" fill="#c8701a"/><path d="M8 8h12M8 11h12M8 14h12M8 17h12" stroke="#0f5a9a" stroke-width="1.500"/><path d="M8 2.500v3M12 2.500v3M16 2.500v3M20 2.500v3" stroke="#2a3a4a" stroke-width="1.300"/></svg><svg class="a" style="left:459px;top:1042px" width="28" height="28" viewBox="0 0 28 28"><defs><linearGradient id="ffg" x1="0.7" y1="0" x2="0.3" y2="1"><stop offset="0" stop-color="#ffde3a"/><stop offset=".45" stop-color="#ff8a1a"/><stop offset="1" stop-color="#f0305a"/></linearGradient><radialGradient id="ffp" cx=".5" cy=".4" r=".6"><stop offset="0" stop-color="#9a5af8"/><stop offset="1" stop-color="#5a2ab8"/></radialGradient></defs><path d="M19 1.500c.6 2.400 2.600 3.600 4.200 6 1.700 2.500 2.500 5.700 1.800 8.900C23.800 22 19.300 25.800 14 25.800 7.500 25.800 2.500 20.800 2.500 14.600c0-2.800.9-5.300 2.400-7.200.2 1.100.5 1.800 1 2.400.6-2.400 2-4.200 4-5.100-.3 1 .1 2 .8 2.600 1.600-.2 3.200-.1 4.500.5C17 6.500 18.800 4.300 19 1.500z" fill="url(#ffg)"/><circle cx="14" cy="15" r="6.200" fill="url(#ffp)"/><path d="M7.500 12.500c1.500-2 4.500-2.800 7-1.800 2.200.9 3.400 3 3.200 5.200-.3 2.500-2.400 4.300-4.900 4.300-2.800 0-4.800-1.800-5.300-4 1.300 1 3.200 1 4.400 0-1.900-.5-3.400-1.800-4.400-3.700z" fill="#ff9a2a"/><path d="M19 1.500c.6 2.400 2.600 3.600 4.200 6 1 1.500 1.700 3.200 1.900 5-1-2.500-2.800-3.700-4.400-5.300-1.100-1.100-1.800-2.600-1.700-5.700z" fill="#ffe14a"/></svg><svg class="a" style="left:503px;top:1042px" width="28" height="28" viewBox="0 0 28 28"><rect x="1.500" y="1.500" width="25" height="25" fill="#0a0a86"/><g fill="#8a2a2a" stroke="#c89a9a" stroke-width=".7"><rect x="8.500" y="17.500" width="4.500" height="4.500"/><rect x="13" y="17.500" width="4.500" height="4.500"/><rect x="17.500" y="17.500" width="4.500" height="4.500"/><rect x="8.500" y="22" width="4.500" height="4.500"/><rect x="13" y="22" width="4.500" height="4.500"/><rect x="17.500" y="22" width="4.500" height="4.500"/><rect x="17.500" y="13" width="4.500" height="4.500"/></g><circle cx="8" cy="8.500" r="5.500" fill="#e01010"/><path d="M9.500 3.500a5.500 5.500 0 0 1 0 10.500 6.500 6.500 0 0 0 0-10.500z" fill="#fff"/><path d="M6 6l2.500 3 2-2" stroke="#700" stroke-width="1" fill="none"/><text x="18.500" y="18" font-family="Liberation Serif,serif" font-size="13" font-weight="bold" font-style="italic" fill="#f6ee1a" text-anchor="middle" letter-spacing="-1">JH</text></svg><svg class="a" style="left:547px;top:1042px" width="28" height="28" viewBox="0 0 28 28"><defs><linearGradient id="phg" x1="0" y1="1" x2="1" y2="0"><stop offset="0" stop-color="#2aa4f4"/><stop offset=".55" stop-color="#3a86e0"/><stop offset="1" stop-color="#6a5ac8"/></linearGradient></defs><rect x="2.500" y="2.500" width="23" height="23" rx="3.500" fill="url(#phg)"/><path d="M2.500 21.500L13 10.500l7 7.500 2.500-2.500 3 3.200V22a3.500 3.500 0 0 1-3.500 3.500H6A3.500 3.500 0 0 1 2.500 22z" fill="#1f7ad8"/><path d="M2.500 22l9.500-9.500L24.800 25.300a3.500 3.500 0 0 1-2.800.2H6A3.500 3.500 0 0 1 2.500 22z" fill="#46b8f6"/><path d="M7 25.500l8-8 8 8z" fill="#7ad4fa"/><circle cx="20" cy="8" r="2" fill="#fff"/></svg><div class="a" style="left:74px;top:1072px;width:6px;height:3px;border-radius:2px;background:#8a8e94"></div><div class="a" style="left:162px;top:1072px;width:6px;height:3px;border-radius:2px;background:#8a8e94"></div><div class="a" style="left:249px;top:1072px;width:6px;height:3px;border-radius:2px;background:#8a8e94"></div><div class="a" style="left:294px;top:1072px;width:6px;height:3px;border-radius:2px;background:#8a8e94"></div><div class="a" style="left:426px;top:1072px;width:6px;height:3px;border-radius:2px;background:#8a8e94"></div><div class="a" style="left:470px;top:1072px;width:6px;height:3px;border-radius:2px;background:#8a8e94"></div><div class="a" style="left:514px;top:1072px;width:6px;height:3px;border-radius:2px;background:#8a8e94"></div><div class="a" style="left:558px;top:1072px;width:6px;height:3px;border-radius:2px;background:#8a8e94"></div><svg class="a" style="left:1724px;top:1050px" width="14" height="10" viewBox="0 0 14 10"><path d="M1 8l6-6 6 6" fill="none" stroke="#fff" stroke-width="1.400"/></svg><div class="a ui" style="left:1750px;top:1045px;font-size:16px;line-height:22px;color:#fff">あ</div><svg class="a" style="left:1782px;top:1047px" width="18" height="16" viewBox="0 0 18 16"><g fill="none" stroke="#fff" stroke-width="1.400"><path d="M1.500 6a10.500 10.500 0 0 1 15 0"/><path d="M4 8.800a7 7 0 0 1 10 0"/><path d="M6.500 11.500a3.500 3.500 0 0 1 5 0"/></g><circle cx="9" cy="13.800" r="1.200" fill="#fff"/></svg><svg class="a" style="left:1806px;top:1048px" width="18" height="14" viewBox="0 0 18 14"><path d="M1 5h3l4-3.500v11L4 9H1z" fill="none" stroke="#fff" stroke-width="1.200"/><path d="M10.500 4.500a3.500 3.500 0 0 1 0 5M12.500 2.500a6.500 6.500 0 0 1 0 9" fill="none" stroke="#fff" stroke-width="1.100"/><path d="M14.800 1a9 9 0 0 1 0 12" fill="none" stroke="#777" stroke-width="1"/></svg><div class="a ui" style="left:1831px;top:1040px;width:70px;font-size:12px;line-height:16px;color:#fff;text-align:right;white-space:nowrap">20:38<br>2023/01/29</div>
</body></html>
